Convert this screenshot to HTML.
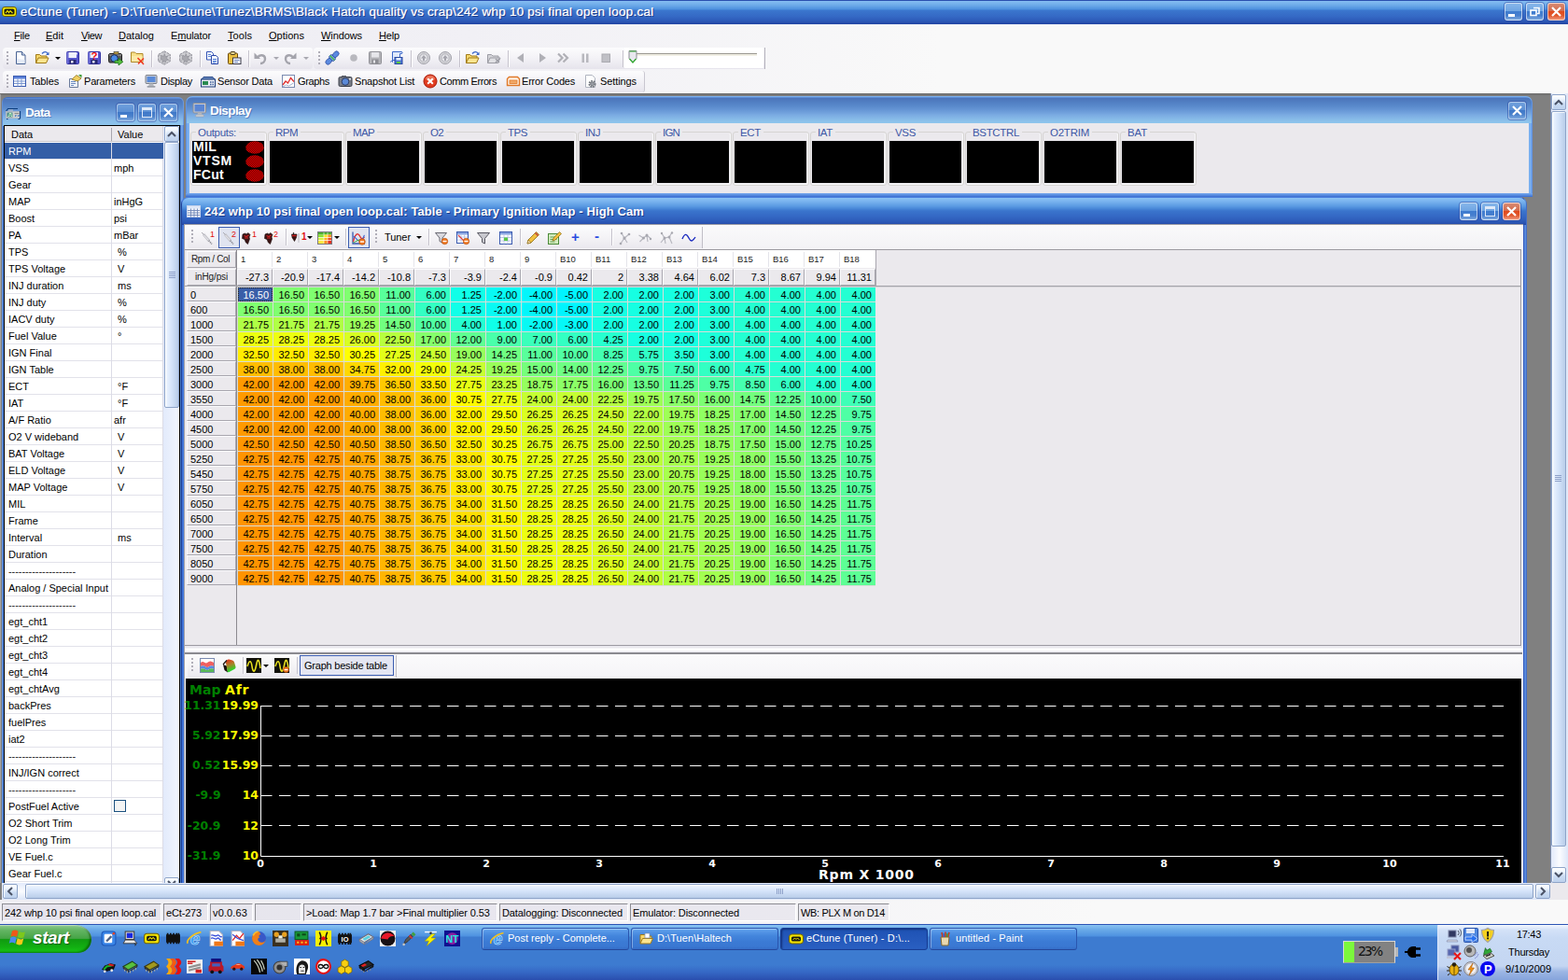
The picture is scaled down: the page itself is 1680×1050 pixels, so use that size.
<!DOCTYPE html><html><head><meta charset="utf-8"><title>eCtune (Tuner)</title><style>*{box-sizing:border-box;margin:0;padding:0}
html,body{width:1680px;height:1050px;overflow:hidden;background:#808080}
body{position:relative;font-family:"Liberation Sans",sans-serif;font-size:11px;color:#000}
.a{position:absolute}
.t{position:absolute;white-space:nowrap;line-height:14px;height:14px}
svg{position:absolute;overflow:visible}
.ttl{position:absolute;white-space:nowrap;color:#fff;font-weight:bold;line-height:16px;height:16px;font-size:13px;text-shadow:1px 1px 0 #20408a}
.sep{position:absolute;width:2px;height:18px;border-left:1px solid #c5c2cc;border-right:1px solid #fff}
.grip{position:absolute;width:2px;height:16px;background-image:repeating-linear-gradient(180deg,#b0aeb8 0,#b0aeb8 2px,transparent 2px,transparent 4px)}
.sb{position:absolute;background:#f0f0f6;border:1px solid #d8d6dc}
.sp{position:absolute;height:19px;top:968px;background:rgba(214,210,224,.33);border:1px solid;border-color:#8c8c92 #fff #fff #8c8c92;white-space:nowrap;overflow:hidden}
.xb{position:absolute;border:1px solid #fff;border-radius:3px}
</style></head><body>
<div class="a" style="left:0px;top:0px;width:1680px;height:26px;background:linear-gradient(180deg,#2a4fae 0,#2a4fae 1px,#86bef2 1px,#6aa8e8 6px,#4d90de 10px,#3b77ce 11px,#3468c4 18px,#2c58b6 23px,#2448a6 25px)"></div>
<svg style="left:2px;top:7px" width="16" height="11" viewBox="0 0 16 11"><rect x=".5" y=".5" width="15" height="10" rx="2.500" fill="#f4e800" stroke="#6a5e00"/><rect x="2.500" y="2.500" width="11" height="6" rx="1.500" fill="#1a1a10"/><path d="M4 7l2-2.500 1.500 2 1.500-2 2.500 2.500" stroke="#f4e800" fill="none" stroke-width="1.100"/></svg>
<span class="ttl" style="left:22px;top:5px;font-weight:normal;font-size:13.5px;text-shadow:1px 1px 0 #1c3c8c,0 0 1px #fff;letter-spacing:0.23px">eCtune (Tuner) - D:\Tuen\eCtune\Tunez\BRMS\Black Hatch quality vs crap\242 whp 10 psi final open loop.cal</span>
<div class="a" style="left:1612px;top:3px;width:19px;height:19px;background:linear-gradient(180deg,#86b6ea 0,#6ea4e2 48%,#3f7ccf 50%,#477fce 75%,#7fa9de 100%);border:1px solid rgba(255,255,255,0.6);border-radius:3px;box-shadow:0 0 0 1px rgba(40,70,160,.5)"></div>
<div class="a" style="left:1616px;top:15px;width:7px;height:3px;background:#fff"></div>
<div class="a" style="left:1635px;top:3px;width:19px;height:19px;background:linear-gradient(180deg,#86b6ea 0,#6ea4e2 48%,#3f7ccf 50%,#477fce 75%,#7fa9de 100%);border:1px solid rgba(255,255,255,0.6);border-radius:3px;box-shadow:0 0 0 1px rgba(40,70,160,.5)"></div>
<svg style="left:1635px;top:3px" width="19" height="19" viewBox="0 0 19 19"><path d="M8 5.5h6v6h-2" fill="none" stroke="#fff" stroke-width="1.6"/><rect x="5" y="8" width="6" height="5.5" fill="none" stroke="#fff" stroke-width="1.6"/></svg>
<div class="a" style="left:1658px;top:3px;width:19px;height:19px;background:linear-gradient(180deg,#d88a72 0,#d4694a 48%,#e04a1c 50%,#e2582c 75%,#f0987c 100%);border:1px solid rgba(255,255,255,0.6);border-radius:3px;box-shadow:0 0 0 1px rgba(40,70,160,.5)"></div>
<svg style="left:1658px;top:3px" width="19" height="19" viewBox="0 0 19 19"><path d="M5 5l9 9M14 5l-9 9" stroke="#fff" stroke-width="2.2" stroke-linecap="butt"/></svg>
<div class="a" style="left:0px;top:26px;width:1680px;height:74px;background:linear-gradient(90deg,#edecf2 0,#f1f0f5 30%,#f9f9f9 60%,#f9f9f9 100%)"></div>
<span class="t" style="left:15px;top:31px;letter-spacing:-0.18px"><u>F</u>ile</span>
<span class="t" style="left:49px;top:31px;letter-spacing:0.01px"><u>E</u>dit</span>
<span class="t" style="left:87px;top:31px;letter-spacing:-0.41px"><u>V</u>iew</span>
<span class="t" style="left:127px;top:31px;letter-spacing:0.01px"><u>D</u>atalog</span>
<span class="t" style="left:183px;top:31px;letter-spacing:-0.13px">E<u>m</u>ulator</span>
<span class="t" style="left:244px;top:31px;letter-spacing:0.06px"><u>T</u>ools</span>
<span class="t" style="left:288px;top:31px;letter-spacing:0.01px"><u>O</u>ptions</span>
<span class="t" style="left:344px;top:31px;letter-spacing:-0.09px"><u>W</u>indows</span>
<span class="t" style="left:406px;top:31px;letter-spacing:-0.16px"><u>H</u>elp</span>
<div class="a" style="left:3px;top:51px;width:332px;height:23px;background:linear-gradient(180deg,#fcfcfd 0,#f4f3f7 45%,#e6e4ec 100%);border-radius:4px 3px 3px 4px"></div>
<div class="a" style="left:336px;top:51px;width:484px;height:23px;background:linear-gradient(180deg,#fcfcfd 0,#f4f3f7 45%,#e6e4ec 100%);border-radius:4px 3px 3px 4px;border-right:1px solid #b4b2bc;border-radius:4px 0 0 4px"></div>
<div class="a" style="left:3px;top:76px;width:688px;height:23px;background:linear-gradient(180deg,#fcfcfd 0,#f4f3f7 45%,#e6e4ec 100%);border-radius:4px 3px 3px 4px;border-right:1px solid #c8c6d0"></div>
<div class="grip" style="left:7px;top:55px"></div>
<div class="grip" style="left:341px;top:55px"></div>
<div class="grip" style="left:7px;top:80px"></div>
<div class="sep" style="left:162px;top:54px"></div>
<div class="sep" style="left:214px;top:54px"></div>
<div class="sep" style="left:266px;top:54px"></div>
<div class="sep" style="left:440px;top:54px"></div>
<div class="sep" style="left:492px;top:54px"></div>
<div class="sep" style="left:544px;top:54px"></div>
<div class="sep" style="left:667px;top:54px"></div>
<svg style="left:14px;top:54px" width="16" height="16" viewBox="0 0 16 16"><path d="M3.500 1.500h6l3.500 3.500v9.500h-9.500z" fill="#fdfdff" stroke="#4a6494"/><path d="M4 9l8.500 1v4h-8.500z" fill="#e4eaf6"/><path d="M9.500 1.500v3.500h3.500" fill="#d4dcee" stroke="#4a6494"/></svg>
<svg style="left:37px;top:54px" width="16" height="16" viewBox="0 0 16 16"><path d="M1.5 13.500v-9h4l1.500 1.500h6v2" fill="#f6d66a" stroke="#a07a18"/><path d="M1.500 13.500l2.500-5.500h11l-2.500 5.500z" fill="#fbe58f" stroke="#a07a18"/><path d="M8 3.500c2-2.500 5-2.500 6 0" fill="none" stroke="#3a66c8" stroke-width="1.300"/><path d="M15.500 1.500v3.500h-3.500z" fill="#3a66c8"/></svg>
<svg style="left:70px;top:54px" width="16" height="16" viewBox="0 0 16 16"><rect x="1.500" y="1.500" width="13" height="13" rx="1" fill="#5656cc" stroke="#3030a0"/><path d="M2 2v12" stroke="#8c8ce4"/><rect x="3.500" y="2" width="8.500" height="6" fill="#f0f2fc"/><path d="M12.500 2.500v2" stroke="#c8c8f0"/><rect x="4.500" y="10" width="7" height="4.500" fill="#26266e"/><rect x="6" y="11" width="2.500" height="2.500" fill="#e8ecfa"/></svg>
<svg style="left:93px;top:54px" width="16" height="16" viewBox="0 0 16 16"><rect x="1.500" y="1.500" width="13" height="13" rx="1" fill="#5656cc" stroke="#3030a0"/><path d="M2 2v12" stroke="#8c8ce4"/><rect x="3.500" y="2" width="8.500" height="6" fill="#f0f2fc"/><rect x="4.500" y="10" width="7" height="4.500" fill="#26266e"/><rect x="6" y="11" width="2.500" height="2.500" fill="#e8ecfa"/><text x="8" y="10" font-size="11.500" font-weight="bold" fill="#f01010" text-anchor="middle" font-family="Liberation Sans,sans-serif">?</text></svg>
<svg style="left:116px;top:54px" width="16" height="16" viewBox="0 0 16 16"><rect x=".5" y="3.500" width="14" height="9.500" rx="1.500" fill="#585858" stroke="#202020"/><rect x="1" y="4" width="13" height="2" fill="#808080"/><rect x="6" y="1.500" width="5" height="2.500" fill="#c0a040" stroke="#303030" stroke-width=".6"/><circle cx="6.500" cy="8.500" r="3.800" fill="#4a8ae4" stroke="#1c2c58"/><path d="M7 11h4v-2.500l4.800 3.700-4.800 3.700v-2.400h-4z" fill="#58c040" stroke="#1c7418" stroke-width=".8"/></svg>
<svg style="left:139px;top:54px" width="16" height="16" viewBox="0 0 16 16"><path d="M1.500 12.500v-10.500h4l1.500 1.500h7v9z" fill="#f8e08a" stroke="#b08a28"/><path d="M2 6h11.500v6h-11.500z" fill="#fceaa8"/><path d="M8.500 8l6.500 7m0-6.500l-6 6" stroke="#f03820" stroke-width="1.500"/></svg>
<svg style="left:168px;top:54px" width="16" height="16" viewBox="0 0 16 16"><path d="M8 .8l6.300 3.600v7.200l-6.300 3.600-6.300-3.600v-7.200z" fill="#d0d0d4" stroke="#8e8e96" stroke-dasharray="2.500 .8"/><path d="M8 .8v14.400M1.700 4.400l12.600 7.200M14.300 4.400l-12.600 7.200" stroke="#9c9ca4" stroke-width=".7"/><path d="M5 5l2 1.500 1.500-2.500 1 3 2-1-1 2.500 2 1.500-2.500.5-.5 2.500-1.500-2-2 2v-3l-2-1z" fill="#a8a8ae" stroke="#86868e" stroke-width=".5"/></svg>
<svg style="left:191px;top:54px" width="16" height="16" viewBox="0 0 16 16"><path d="M8 .8l6.300 3.600v7.200l-6.300 3.600-6.300-3.600v-7.200z" fill="#d0d0d4" stroke="#8e8e96" stroke-dasharray="2.500 .8"/><path d="M8 .8v14.400M1.700 4.400l12.600 7.200M14.300 4.400l-12.600 7.200" stroke="#9c9ca4" stroke-width=".7"/><path d="M5 5l2 1.500 1.500-2.500 1 3 2-1-1 2.500 2 1.500-2.500.5-.5 2.500-1.500-2-2 2v-3l-2-1z" fill="#a8a8ae" stroke="#86868e" stroke-width=".5"/></svg>
<svg style="left:220px;top:54px" width="16" height="16" viewBox="0 0 16 16"><path d="M1.500 1.500h5l2 2v6.500h-7z" fill="#f4f8ff" stroke="#3454b4"/><path d="M3 4.500h3M3 6.500h4" stroke="#5a84d8"/><path d="M6.500 5.500h5l2 2v7h-7z" fill="#f4f8ff" stroke="#2c48a8"/><path d="M8 9.500h4M8 11.500h4M8 13h3" stroke="#4a78d4"/></svg>
<svg style="left:243px;top:54px" width="16" height="16" viewBox="0 0 16 16"><rect x="1.500" y="3" width="10" height="11.500" rx="1" fill="#ecc040" stroke="#6a4a10"/><rect x="4" y="1.500" width="5" height="3" rx="1" fill="#e0d090" stroke="#50401a"/><rect x="6.500" y="8" width="8.500" height="6.500" fill="#f4f6fc" stroke="#3a3a48"/><path d="M8 10.500h5.500M8 12.500h4" stroke="#7088c0"/></svg>
<svg style="left:271px;top:54px" width="16" height="16" viewBox="0 0 16 16"><path d="M1.500 2.500v6.500h6.500z" fill="#a4a4ac"/><path d="M5 7.500c2-3.500 8-3 8 1.500 0 3-2.500 5-5 5" fill="none" stroke="#a4a4ac" stroke-width="2.400"/></svg>
<svg style="left:303px;top:54px" width="16" height="16" viewBox="0 0 16 16"><path d="M14.500 2.500v6.500h-6.500z" fill="#a4a4ac"/><path d="M11 7.500c-2-3.500-8-3-8 1.500 0 3 2.500 5 5 5" fill="none" stroke="#a4a4ac" stroke-width="2.400"/></svg>
<svg style="left:348px;top:54px" width="16" height="16" viewBox="0 0 16 16"><g transform="rotate(-45 8 8)"><rect x="-1" y="5.500" width="7.500" height="5" rx="2.500" fill="#5a8ae0" stroke="#2a4aa0" stroke-width=".8"/><rect x="9.500" y="5.500" width="7.500" height="5" rx="2.500" fill="#5a8ae0" stroke="#2a4aa0" stroke-width=".8"/><rect x="6" y="4.500" width="4" height="7" rx="1" fill="#78a0e8" stroke="#2a4aa0" stroke-width=".8"/><path d="M8 4.500v7" stroke="#48c040" stroke-width="1.200"/></g></svg>
<svg style="left:371px;top:54px" width="16" height="16" viewBox="0 0 16 16"><circle cx="8" cy="8" r="3.800" fill="#b8b8be"/></svg>
<svg style="left:394px;top:54px" width="16" height="16" viewBox="0 0 16 16"><rect x="1.500" y="1.500" width="13" height="13" rx="1" fill="#b4b4b8" stroke="#909096"/><rect x="4" y="2" width="8" height="5.500" fill="#e6e6ea"/><rect x="4.500" y="9.500" width="7" height="5" fill="#8c8c92"/><rect x="6" y="10.500" width="2" height="3" fill="#e6e6ea"/></svg>
<svg style="left:417px;top:54px" width="16" height="16" viewBox="0 0 16 16"><path d="M3.500 1.500h9.500c1.500 0 1.500 2 0 2h-1.500v7h-8z" fill="#dfe9fb" stroke="#3a66c8"/><path d="M1.500 12.500c0-1.500 2-1.500 2 0v-9" fill="none" stroke="#3a66c8"/><rect x="6" y="7.500" width="8" height="7" fill="#4a74d4" stroke="#2a4aa0"/><rect x="7.500" y="8" width="5" height="2.500" fill="#e8f0ff"/><rect x="8" y="12" width="4" height="2" fill="#5ac840"/></svg>
<svg style="left:446px;top:54px" width="16" height="16" viewBox="0 0 16 16"><circle cx="8" cy="8" r="6.500" fill="#d4d4d8" stroke="#a0a0a8"/><circle cx="8" cy="8" r="4.200" fill="#e8e8ec" stroke="#b0b0b8"/><path d="M8 5l3 3.500h-2v2.500h-2v-2.500h-2z" fill="#a4a4ac"/></svg>
<svg style="left:469px;top:54px" width="16" height="16" viewBox="0 0 16 16"><circle cx="8" cy="8" r="6.500" fill="#d4d4d8" stroke="#a0a0a8"/><circle cx="8" cy="8" r="4.200" fill="#e8e8ec" stroke="#b0b0b8"/><path d="M8 5l3 3.500h-2v2.500h-2v-2.500h-2z" fill="#a4a4ac"/></svg>
<svg style="left:498px;top:54px" width="16" height="16" viewBox="0 0 16 16"><path d="M1.5 13.500v-9h4l1.500 1.500h6v2" fill="#f6d66a" stroke="#a07a18"/><path d="M1.500 13.500l2.500-5.500h11l-2.500 5.500z" fill="#fbe58f" stroke="#a07a18"/><path d="M8 3.500c2-2.500 5-2.500 6 0" fill="none" stroke="#3a66c8" stroke-width="1.300"/><path d="M15.500 1.500v3.500h-3.500z" fill="#3a66c8"/></svg>
<svg style="left:521px;top:54px" width="16" height="16" viewBox="0 0 16 16"><path d="M1.500 13.500v-9h4l1.500 1.500h6v2" fill="#d4d4d8" stroke="#9c9ca4"/><path d="M1.500 13.500l2.500-5.500h11l-2.500 5.500z" fill="#e0e0e4" stroke="#9c9ca4"/><path d="M10 9l4 4m0-4l-4 4" stroke="#9c9ca4" stroke-width="1.300"/></svg>
<svg style="left:550px;top:54px" width="16" height="16" viewBox="0 0 16 16"><path d="M11 3v10l-7-5z" fill="#b0b0b6"/></svg>
<svg style="left:573px;top:54px" width="16" height="16" viewBox="0 0 16 16"><path d="M5 3v10l7-5z" fill="#b0b0b6"/></svg>
<svg style="left:595px;top:54px" width="16" height="16" viewBox="0 0 16 16"><path d="M3 3.500l4.500 4.500-4.500 4.500M8.500 3.500l4.500 4.500-4.500 4.500" fill="none" stroke="#b0b0b6" stroke-width="2.200"/></svg>
<svg style="left:619px;top:54px" width="16" height="16" viewBox="0 0 16 16"><rect x="4.500" y="3.500" width="2.500" height="9.500" fill="#b8b8be"/><rect x="9" y="3.500" width="2.500" height="9.500" fill="#b8b8be"/></svg>
<svg style="left:641px;top:54px" width="16" height="16" viewBox="0 0 16 16"><rect x="4" y="4" width="8.500" height="8.500" fill="#c0c0c6" stroke="#aaaab0"/></svg>
<svg style="left:59px;top:61px" width="6" height="3" viewBox="0 0 6 3"><path d="M0 0h6l-3 3z" fill="#000"/></svg>
<svg style="left:293px;top:61px" width="6" height="3" viewBox="0 0 6 3"><path d="M0 0h6l-3 3z" fill="#a8a8b0"/></svg>
<svg style="left:325px;top:61px" width="6" height="3" viewBox="0 0 6 3"><path d="M0 0h6l-3 3z" fill="#a8a8b0"/></svg>
<div class="a" style="left:669px;top:51px;width:149px;height:22px;background:#fff"></div>
<div class="a" style="left:680px;top:57px;width:131px;height:3px;background:#f0eee4;border-top:1px solid #9a9890;border-left:1px solid #9a9890"></div>
<svg style="left:673px;top:54px" width="10" height="14" viewBox="0 0 10 14"><path d="M1 .5h8v8l-4 4.500-4-4.500z" fill="#e8e8ee" stroke="#8a8a92"/><path d="M1.500 9l3.500 4 3.500-4" fill="none" stroke="#30a830" stroke-width="1.200"/><path d="M1.500 1h7" stroke="#30a830"/></svg>
<svg style="left:13px;top:79px" width="16" height="16" viewBox="0 0 16 16"><rect x="1.500" y="2.500" width="13" height="11" fill="#fff" stroke="#3a5ab0"/><rect x="2" y="3" width="12" height="2.500" fill="#5a80d8"/><path d="M2 8h12M2 10.500h12M6 5.500v8M10 5.500v8" stroke="#7a96d0"/></svg>
<span class="t" style="left:32px;top:80px;;letter-spacing:-0.13px">Tables</span>
<svg style="left:72px;top:79px" width="16" height="16" viewBox="0 0 16 16"><path d="M2.500 5.500h9v9h-9z" fill="#f4f6fc" stroke="#6a7a9a"/><path d="M4 8.500h5M4 10.500h5M4 12.500h3" stroke="#6a8ac0"/><path d="M5 6l5-4.500 5 3.500-4 3z" fill="#f0d060" stroke="#907018" stroke-width=".8"/><path d="M12 1l3.500 0 0 3.500z" fill="#3a9a30"/></svg>
<span class="t" style="left:90px;top:80px;;letter-spacing:-0.19px">Parameters</span>
<svg style="left:154px;top:79px" width="16" height="16" viewBox="0 0 16 16"><rect x="2" y="1.500" width="12" height="9" rx="1" fill="#c8ccd4" stroke="#7a7e88"/><rect x="3.500" y="3" width="9" height="6" fill="#5a8ad8"/><path d="M6 10.500h4l1 3h-6z" fill="#b4b8c0"/><rect x="3.500" y="13" width="9" height="1.800" rx=".8" fill="#9a9ea8"/></svg>
<span class="t" style="left:172px;top:80px;;letter-spacing:-0.30px">Display</span>
<svg style="left:215px;top:79px" width="16" height="16" viewBox="0 0 16 16"><path d="M1 6l2-2.500h10l2 2.500" fill="#6a8ac0" stroke="#2a4a88"/><rect x=".5" y="6" width="15" height="8" fill="#e8ecf4" stroke="#1a3a78"/><rect x="2" y="8" width="6" height="4" fill="#2a8a50"/><path d="M10 9h1.500M12.500 9h1.500M10 11.500h1.500M12.500 11.500h1.500" stroke="#3a5a98" stroke-width="1.500"/></svg>
<span class="t" style="left:233px;top:80px;;letter-spacing:-0.20px">Sensor Data</span>
<svg style="left:301px;top:79px" width="16" height="16" viewBox="0 0 16 16"><rect x="1.500" y="1.500" width="13" height="13" fill="#fff" stroke="#7a8ab0"/><path d="M2 12l3-4 2.500 2 3-5.500 3.500 4" fill="none" stroke="#e03030" stroke-width="1.300"/><path d="M2 14l3.500-2 3 1 5-3" fill="none" stroke="#8a9ac0" stroke-width=".8"/></svg>
<span class="t" style="left:319px;top:80px;;letter-spacing:-0.35px">Graphs</span>
<svg style="left:362px;top:79px" width="16" height="16" viewBox="0 0 16 16"><rect x="1" y="3.500" width="14" height="10" rx="1.500" fill="#7a7e88" stroke="#3a3e48"/><rect x="4" y="2" width="5" height="2.500" fill="#5a5e68"/><circle cx="8" cy="8.500" r="3.800" fill="#5c8ad8" stroke="#2c3c68"/><rect x="12" y="5" width="2" height="1.500" fill="#e8e8f0"/></svg>
<span class="t" style="left:380px;top:80px;;letter-spacing:-0.20px">Snapshot List</span>
<svg style="left:453px;top:79px" width="16" height="16" viewBox="0 0 16 16"><circle cx="8" cy="8" r="7" fill="#e03c20" stroke="#a81808"/><ellipse cx="8" cy="5" rx="5" ry="3" fill="#f08a70" opacity=".7"/><path d="M5.200 5.200l5.600 5.600m0-5.600l-5.600 5.600" stroke="#fff" stroke-width="2"/></svg>
<span class="t" style="left:471px;top:80px;;letter-spacing:-0.40px">Comm Errors</span>
<svg style="left:542px;top:79px" width="16" height="16" viewBox="0 0 16 16"><path d="M1.500 5.500l2-2h9l2 2v7h-13z" fill="#fff4e8" stroke="#e07828" stroke-width="1.400"/><rect x="4" y="7" width="8" height="3.500" fill="#f0a868" stroke="#e07828" stroke-width=".8"/></svg>
<span class="t" style="left:559px;top:80px;;letter-spacing:-0.21px">Error Codes</span>
<svg style="left:625px;top:79px" width="16" height="16" viewBox="0 0 16 16"><path d="M2.500 1.500h7l3 3v10h-10z" fill="#fff" stroke="#b0b4c0"/><circle cx="9.500" cy="11" r="3" fill="none" stroke="#70747c" stroke-width="2" stroke-dasharray="1.600 .9"/><circle cx="9.500" cy="11" r="1.800" fill="#a0a4ac" stroke="#60646c" stroke-width=".8"/></svg>
<span class="t" style="left:643px;top:80px;;letter-spacing:-0.09px">Settings</span>
<div class="a" style="left:0px;top:100px;width:1661px;height:1px;background:#6c6c6c"></div>
<div class="a" style="left:0px;top:101px;width:1px;height:845px;background:#a4a4a4"></div>
<div class="a" style="left:1px;top:101px;width:1660px;height:2px;background:linear-gradient(180deg,#747474,#808080)"></div>
<div class="a" style="left:2px;top:104px;width:195px;height:846px;background:linear-gradient(90deg,#6a9ae2 0,#3f6fc6 2px,#3f6fc6 3px,#6a9ae2 100%);border-radius:6px 6px 0 0"></div>
<div class="a" style="left:3px;top:105px;width:193px;height:30px;background:linear-gradient(180deg,#6a9ee8 0,#4c74ba 1px,#5280c4 6px,#5a8acc 10px,#6a9ad8 15px,#7aaae2 19px,#88bce8 24px,#90c8ee 30px);border-radius:5px 5px 0 0"></div>
<div class="a" style="left:193px;top:134px;width:4px;height:812px;background:linear-gradient(90deg,#3f6fc6,#7fb0f0 50%,#3f6fc6)"></div>
<svg style="left:6px;top:116px" width="16" height="12" viewBox="0 0 16 12"><path d="M.5 3l2-2.500h10.500" fill="none" stroke="#0c3c7c" stroke-width="1.100"/><path d="M3 2h5" stroke="#c8c8c8" stroke-width="1"/><rect x=".5" y="3.500" width="15" height="7" fill="#d2d2d2" stroke="#b8b8b8" stroke-width=".6"/><path d="M15.500 3v8" stroke="#0c3c7c" stroke-width="1.200"/><rect x="1.500" y="4.500" width="6" height="5" fill="#48888c"/><path d="M2.500 8.500h1.500v-3h2v3h1" fill="none" stroke="#c8ffc0" stroke-width=".9"/><path d="M9.500 5.500h5" stroke="#8a8a8a" stroke-width="1.200"/><path d="M10 8.500l1.500-1M13 8.500l1.500-1" stroke="#2a6ac0" stroke-width="1.300"/><path d="M1 11.500h1.500M13.500 11.500h2" stroke="#0c3c7c" stroke-width="1.200"/></svg>
<span class="ttl" style="left:27px;top:113px;font-size:13.500px;text-shadow:1px 1px 0 rgba(40,70,140,.45);letter-spacing:-0.69px">Data</span>
<div class="a" style="left:125px;top:111px;width:19px;height:19px;background:linear-gradient(180deg,#6f9fdc 0,#5a8fd4 48%,#3f78c8 50%,#4b82cc 75%,#7da8de 100%);border:1px solid rgba(255,255,255,0.42);border-radius:3px;box-shadow:0 0 0 1px rgba(40,70,160,.5)"></div>
<div class="a" style="left:129px;top:123px;width:7px;height:3px;background:#fff"></div>
<div class="a" style="left:148px;top:111px;width:19px;height:19px;background:linear-gradient(180deg,#6f9fdc 0,#5a8fd4 48%,#3f78c8 50%,#4b82cc 75%,#7da8de 100%);border:1px solid rgba(255,255,255,0.42);border-radius:3px;box-shadow:0 0 0 1px rgba(40,70,160,.5)"></div>
<div class="a" style="left:152px;top:115px;width:11px;height:11px;border:1px solid #dfe9f8;border-top:3px solid #dfe9f8"></div>
<div class="a" style="left:171px;top:111px;width:19px;height:19px;background:linear-gradient(180deg,#6f9fdc 0,#5a8fd4 48%,#3f78c8 50%,#4b82cc 75%,#7da8de 100%);border:1px solid rgba(255,255,255,0.42);border-radius:3px;box-shadow:0 0 0 1px rgba(40,70,160,.5)"></div>
<svg style="left:171px;top:111px" width="19" height="19" viewBox="0 0 19 19"><path d="M5 5l9 9M14 5l-9 9" stroke="#fff" stroke-width="2.2" stroke-linecap="butt"/></svg>
<div class="a" style="left:4px;top:134px;width:189px;height:816px;background:#fff;border:1px solid #000;border-bottom:0"></div>
<div class="a" style="left:5px;top:135px;width:170px;height:17px;background:#ebe9ed;border-bottom:1px solid #c8c6cc;border-right:1px solid #d8d6dc"></div>
<div class="a" style="left:119px;top:137px;width:1px;height:14px;background:#a8a6ae"></div>
<span class="t" style="left:12px;top:137px;">Data</span>
<span class="t" style="left:126px;top:137px;">Value</span>
<div class="a" style="left:5px;top:153px;width:170px;height:798px;background-image:repeating-linear-gradient(180deg,transparent 0,transparent 17px,#e2e2ea 17px,#e2e2ea 18px)"></div>
<div class="a" style="left:119px;top:152px;width:1px;height:798px;background:#dcdce6"></div>
<div class="a" style="left:174px;top:152px;width:1px;height:798px;background:#dcdce6"></div>
<div class="a" style="left:5px;top:153px;width:170px;height:17px;background:#345ea6"></div>
<div class="a" style="left:119px;top:153px;width:1px;height:17px;background:#dcdce6"></div>
<span class="t" style="left:9px;top:155px;color:#fff;">RPM</span>
<span class="t" style="left:9px;top:173px;">VSS</span>
<span class="t" style="left:122px;top:173px;">mph</span>
<span class="t" style="left:9px;top:191px;">Gear</span>
<span class="t" style="left:9px;top:209px;">MAP</span>
<span class="t" style="left:122px;top:209px;">inHgG</span>
<span class="t" style="left:9px;top:227px;">Boost</span>
<span class="t" style="left:122px;top:227px;">psi</span>
<span class="t" style="left:9px;top:245px;">PA</span>
<span class="t" style="left:122px;top:245px;">mBar</span>
<span class="t" style="left:9px;top:263px;">TPS</span>
<span class="t" style="left:126px;top:263px;">%</span>
<span class="t" style="left:9px;top:281px;">TPS Voltage</span>
<span class="t" style="left:126px;top:281px;">V</span>
<span class="t" style="left:9px;top:299px;">INJ duration</span>
<span class="t" style="left:126px;top:299px;">ms</span>
<span class="t" style="left:9px;top:317px;">INJ duty</span>
<span class="t" style="left:126px;top:317px;">%</span>
<span class="t" style="left:9px;top:335px;">IACV duty</span>
<span class="t" style="left:126px;top:335px;">%</span>
<span class="t" style="left:9px;top:353px;">Fuel Value</span>
<span class="t" style="left:126px;top:353px;">°</span>
<span class="t" style="left:9px;top:371px;">IGN Final</span>
<span class="t" style="left:9px;top:389px;">IGN Table</span>
<span class="t" style="left:9px;top:407px;">ECT</span>
<span class="t" style="left:126px;top:407px;">°F</span>
<span class="t" style="left:9px;top:425px;">IAT</span>
<span class="t" style="left:126px;top:425px;">°F</span>
<span class="t" style="left:9px;top:443px;">A/F Ratio</span>
<span class="t" style="left:122px;top:443px;">afr</span>
<span class="t" style="left:9px;top:461px;">O2 V wideband</span>
<span class="t" style="left:126px;top:461px;">V</span>
<span class="t" style="left:9px;top:479px;">BAT Voltage</span>
<span class="t" style="left:126px;top:479px;">V</span>
<span class="t" style="left:9px;top:497px;">ELD Voltage</span>
<span class="t" style="left:126px;top:497px;">V</span>
<span class="t" style="left:9px;top:515px;">MAP Voltage</span>
<span class="t" style="left:126px;top:515px;">V</span>
<span class="t" style="left:9px;top:533px;">MIL</span>
<span class="t" style="left:9px;top:551px;">Frame</span>
<span class="t" style="left:9px;top:569px;">Interval</span>
<span class="t" style="left:126px;top:569px;">ms</span>
<span class="t" style="left:9px;top:587px;">Duration</span>
<span class="t" style="left:9px;top:605px;color:#222;letter-spacing:-0.06px">--------------------</span>
<span class="t" style="left:9px;top:623px;">Analog / Special Input</span>
<span class="t" style="left:9px;top:641px;color:#222;letter-spacing:-0.06px">--------------------</span>
<span class="t" style="left:9px;top:659px;">egt_cht1</span>
<span class="t" style="left:9px;top:677px;">egt_cht2</span>
<span class="t" style="left:9px;top:695px;">egt_cht3</span>
<span class="t" style="left:9px;top:713px;">egt_cht4</span>
<span class="t" style="left:9px;top:731px;">egt_chtAvg</span>
<span class="t" style="left:9px;top:749px;">backPres</span>
<span class="t" style="left:9px;top:767px;">fuelPres</span>
<span class="t" style="left:9px;top:785px;">iat2</span>
<span class="t" style="left:9px;top:803px;color:#222;letter-spacing:-0.06px">--------------------</span>
<span class="t" style="left:9px;top:821px;">INJ/IGN correct</span>
<span class="t" style="left:9px;top:839px;color:#222;letter-spacing:-0.06px">--------------------</span>
<span class="t" style="left:9px;top:857px;">PostFuel Active</span>
<div class="a" style="left:122px;top:857px;width:13px;height:13px;background:#f4f4f4;border:1px solid #1c5180"></div>
<span class="t" style="left:9px;top:875px;">O2 Short Trim</span>
<span class="t" style="left:9px;top:893px;">O2 Long Trim</span>
<span class="t" style="left:9px;top:911px;">VE Fuel.c</span>
<span class="t" style="left:9px;top:929px;">Gear Fuel.c</span>
<div class="a" style="left:175px;top:135px;width:17px;height:815px;background:linear-gradient(90deg,#e2eafb,#f2f6fe)"></div>
<div class="a" style="left:176px;top:135px;width:16px;height:17px;background:linear-gradient(180deg,#ffffff 0,#f0f6fe 25%,#cbdcf3 60%,#bdd1ed 100%);border:1px solid #8ea4c8;border-radius:2px;box-shadow:inset 1px 1px 0 rgba(255,255,255,.8)"></div>
<svg style="left:179px;top:140px" width="10" height="7" viewBox="0 0 10 7"><path d="M1 6l4-4 4 4" fill="none" stroke="#4a5266" stroke-width="2"/></svg>
<div class="a" style="left:176px;top:152px;width:16px;height:285px;background:linear-gradient(90deg,#ffffff 0,#e8f1fe 14%,#d4e3f9 50%,#b9cde9 100%);border:1px solid #8ea4c8;border-radius:2px;box-shadow:inset 1px 1px 0 rgba(255,255,255,.8)"></div>
<div class="a" style="left:181px;top:291px;width:7px;height:1px;background:#8ea0c8"></div>
<div class="a" style="left:181px;top:293px;width:7px;height:1px;background:#8ea0c8"></div>
<div class="a" style="left:181px;top:295px;width:7px;height:1px;background:#8ea0c8"></div>
<div class="a" style="left:181px;top:297px;width:7px;height:1px;background:#8ea0c8"></div>
<div class="a" style="left:176px;top:940px;width:16px;height:16px;background:linear-gradient(180deg,#ffffff 0,#f0f6fe 25%,#cbdcf3 60%,#bdd1ed 100%);border:1px solid #8ea4c8;border-radius:2px;box-shadow:inset 1px 1px 0 rgba(255,255,255,.8)"></div>
<svg style="left:179px;top:943px" width="10" height="7" viewBox="0 0 10 7"><path d="M1 1l4 4 4-4" fill="none" stroke="#4a5266" stroke-width="2"/></svg>
<div class="a" style="left:199px;top:103px;width:1443px;height:108px;background:linear-gradient(90deg,#5a8ade 0,#7ab0f0 2px,#7ab0f0 1441px,#5a8ade 1443px);border-radius:7px 7px 0 0"></div>
<div class="a" style="left:200px;top:104px;width:1441px;height:28px;background:linear-gradient(180deg,#6a9ee8 0,#4c74ba 1px,#5280c4 6px,#5a8acc 10px,#6a9ad8 15px,#7aaae2 19px,#88bce8 24px,#90c8ee 29px);border-radius:6px 6px 0 0"></div>
<div class="a" style="left:203px;top:132px;width:1435px;height:75px;background:#ebe9ed"></div>
<div class="a" style="left:199px;top:207px;width:1443px;height:4px;background:linear-gradient(180deg,#76a8ee 0,#5a8ee0 50%,#3a6cd0 100%)"></div>
<svg style="left:206px;top:110px" width="16" height="16" viewBox="0 0 16 16"><rect x="1" y=".5" width="13.500" height="10.500" rx="1" fill="#c4c8d0" stroke="#8a8e98"/><rect x="2.500" y="2" width="10.500" height="7.500" fill="#5a86d4"/><path d="M6 11h4l.8 2.500h-5.600z" fill="#b4b8c0"/><rect x="3.500" y="13" width="9" height="2" rx="1" fill="#d0d4da" stroke="#9a9ea8" stroke-width=".6"/></svg>
<span class="ttl" style="left:225px;top:111px;font-size:13.500px;text-shadow:1px 1px 0 rgba(40,70,140,.45);letter-spacing:-0.58px">Display</span>
<div class="a" style="left:1616px;top:109px;width:19px;height:19px;background:linear-gradient(180deg,#6f9fdc 0,#5a8fd4 48%,#3f78c8 50%,#4b82cc 75%,#7da8de 100%);border:1px solid rgba(255,255,255,0.42);border-radius:3px;box-shadow:0 0 0 1px rgba(40,70,160,.5)"></div>
<svg style="left:1616px;top:109px" width="19" height="19" viewBox="0 0 19 19"><path d="M5 5l9 9M14 5l-9 9" stroke="#fff" stroke-width="2.2" stroke-linecap="butt"/></svg>
<div class="a" style="left:204px;top:141px;width:82px;height:58px;border:1px solid #d6d4d2;border-radius:3px"></div>
<div class="a" style="left:205px;top:142px;width:80px;height:56px;border:1px solid #f8f8fa;border-radius:3px;border-top-color:transparent;border-left-color:transparent"></div>
<div class="a" style="left:210px;top:136px;width:46px;height:12px;background:#ebe9ed"></div>
<span class="t" style="left:212px;top:135px;color:#3d58a6;font-size:11.5px;letter-spacing:-0.31px">Outputs:</span>
<div class="a" style="left:206px;top:151px;width:77px;height:45px;background:#000"></div>
<div class="a" style="left:287px;top:141px;width:82px;height:58px;border:1px solid #d6d4d2;border-radius:3px"></div>
<div class="a" style="left:288px;top:142px;width:80px;height:56px;border:1px solid #f8f8fa;border-radius:3px;border-top-color:transparent;border-left-color:transparent"></div>
<div class="a" style="left:293px;top:136px;width:29px;height:12px;background:#ebe9ed"></div>
<span class="t" style="left:295px;top:135px;color:#3d58a6;font-size:11.5px;letter-spacing:-0.52px">RPM</span>
<div class="a" style="left:289px;top:151px;width:77px;height:45px;background:#000"></div>
<div class="a" style="left:370px;top:141px;width:82px;height:58px;border:1px solid #d6d4d2;border-radius:3px"></div>
<div class="a" style="left:371px;top:142px;width:80px;height:56px;border:1px solid #f8f8fa;border-radius:3px;border-top-color:transparent;border-left-color:transparent"></div>
<div class="a" style="left:376px;top:136px;width:28px;height:12px;background:#ebe9ed"></div>
<span class="t" style="left:378px;top:135px;color:#3d58a6;font-size:11.5px;letter-spacing:-0.64px">MAP</span>
<div class="a" style="left:372px;top:151px;width:77px;height:45px;background:#000"></div>
<div class="a" style="left:453px;top:141px;width:82px;height:58px;border:1px solid #d6d4d2;border-radius:3px"></div>
<div class="a" style="left:454px;top:142px;width:80px;height:56px;border:1px solid #f8f8fa;border-radius:3px;border-top-color:transparent;border-left-color:transparent"></div>
<div class="a" style="left:459px;top:136px;width:19px;height:12px;background:#ebe9ed"></div>
<span class="t" style="left:461px;top:135px;color:#3d58a6;font-size:11.5px;letter-spacing:-0.67px">O2</span>
<div class="a" style="left:455px;top:151px;width:77px;height:45px;background:#000"></div>
<div class="a" style="left:536px;top:141px;width:82px;height:58px;border:1px solid #d6d4d2;border-radius:3px"></div>
<div class="a" style="left:537px;top:142px;width:80px;height:56px;border:1px solid #f8f8fa;border-radius:3px;border-top-color:transparent;border-left-color:transparent"></div>
<div class="a" style="left:542px;top:136px;width:26px;height:12px;background:#ebe9ed"></div>
<span class="t" style="left:544px;top:135px;color:#3d58a6;font-size:11.5px;letter-spacing:-0.46px">TPS</span>
<div class="a" style="left:538px;top:151px;width:77px;height:45px;background:#000"></div>
<div class="a" style="left:619px;top:141px;width:82px;height:58px;border:1px solid #d6d4d2;border-radius:3px"></div>
<div class="a" style="left:620px;top:142px;width:80px;height:56px;border:1px solid #f8f8fa;border-radius:3px;border-top-color:transparent;border-left-color:transparent"></div>
<div class="a" style="left:625px;top:136px;width:21px;height:12px;background:#ebe9ed"></div>
<span class="t" style="left:627px;top:135px;color:#3d58a6;font-size:11.5px;letter-spacing:-0.42px">INJ</span>
<div class="a" style="left:621px;top:151px;width:77px;height:45px;background:#000"></div>
<div class="a" style="left:702px;top:141px;width:82px;height:58px;border:1px solid #d6d4d2;border-radius:3px"></div>
<div class="a" style="left:703px;top:142px;width:80px;height:56px;border:1px solid #f8f8fa;border-radius:3px;border-top-color:transparent;border-left-color:transparent"></div>
<div class="a" style="left:708px;top:136px;width:23px;height:12px;background:#ebe9ed"></div>
<span class="t" style="left:710px;top:135px;color:#3d58a6;font-size:11.5px;letter-spacing:-0.82px">IGN</span>
<div class="a" style="left:704px;top:151px;width:77px;height:45px;background:#000"></div>
<div class="a" style="left:785px;top:141px;width:82px;height:58px;border:1px solid #d6d4d2;border-radius:3px"></div>
<div class="a" style="left:786px;top:142px;width:80px;height:56px;border:1px solid #f8f8fa;border-radius:3px;border-top-color:transparent;border-left-color:transparent"></div>
<div class="a" style="left:791px;top:136px;width:27px;height:12px;background:#ebe9ed"></div>
<span class="t" style="left:793px;top:135px;color:#3d58a6;font-size:11.5px;letter-spacing:-0.33px">ECT</span>
<div class="a" style="left:787px;top:151px;width:77px;height:45px;background:#000"></div>
<div class="a" style="left:868px;top:141px;width:82px;height:58px;border:1px solid #d6d4d2;border-radius:3px"></div>
<div class="a" style="left:869px;top:142px;width:80px;height:56px;border:1px solid #f8f8fa;border-radius:3px;border-top-color:transparent;border-left-color:transparent"></div>
<div class="a" style="left:874px;top:136px;width:21px;height:12px;background:#ebe9ed"></div>
<span class="t" style="left:876px;top:135px;color:#3d58a6;font-size:11.5px;letter-spacing:-0.35px">IAT</span>
<div class="a" style="left:870px;top:151px;width:77px;height:45px;background:#000"></div>
<div class="a" style="left:951px;top:141px;width:82px;height:58px;border:1px solid #d6d4d2;border-radius:3px"></div>
<div class="a" style="left:952px;top:142px;width:80px;height:56px;border:1px solid #f8f8fa;border-radius:3px;border-top-color:transparent;border-left-color:transparent"></div>
<div class="a" style="left:957px;top:136px;width:27px;height:12px;background:#ebe9ed"></div>
<span class="t" style="left:959px;top:135px;color:#3d58a6;font-size:11.5px;letter-spacing:-0.34px">VSS</span>
<div class="a" style="left:953px;top:151px;width:77px;height:45px;background:#000"></div>
<div class="a" style="left:1034px;top:141px;width:82px;height:58px;border:1px solid #d6d4d2;border-radius:3px"></div>
<div class="a" style="left:1035px;top:142px;width:80px;height:56px;border:1px solid #f8f8fa;border-radius:3px;border-top-color:transparent;border-left-color:transparent"></div>
<div class="a" style="left:1040px;top:136px;width:55px;height:12px;background:#ebe9ed"></div>
<span class="t" style="left:1042px;top:135px;color:#3d58a6;font-size:11.5px;letter-spacing:-0.34px">BSTCTRL</span>
<div class="a" style="left:1036px;top:151px;width:77px;height:45px;background:#000"></div>
<div class="a" style="left:1117px;top:141px;width:82px;height:58px;border:1px solid #d6d4d2;border-radius:3px"></div>
<div class="a" style="left:1118px;top:142px;width:80px;height:56px;border:1px solid #f8f8fa;border-radius:3px;border-top-color:transparent;border-left-color:transparent"></div>
<div class="a" style="left:1123px;top:136px;width:47px;height:12px;background:#ebe9ed"></div>
<span class="t" style="left:1125px;top:135px;color:#3d58a6;font-size:11.5px;letter-spacing:-0.24px">O2TRIM</span>
<div class="a" style="left:1119px;top:151px;width:77px;height:45px;background:#000"></div>
<div class="a" style="left:1200px;top:141px;width:82px;height:58px;border:1px solid #d6d4d2;border-radius:3px"></div>
<div class="a" style="left:1201px;top:142px;width:80px;height:56px;border:1px solid #f8f8fa;border-radius:3px;border-top-color:transparent;border-left-color:transparent"></div>
<div class="a" style="left:1206px;top:136px;width:26px;height:12px;background:#ebe9ed"></div>
<span class="t" style="left:1208px;top:135px;color:#3d58a6;font-size:11.5px;letter-spacing:-0.17px">BAT</span>
<div class="a" style="left:1202px;top:151px;width:77px;height:45px;background:#000"></div>
<span class="t" style="left:207px;top:150px;color:#fff;font-weight:bold;font-size:14px;line-height:15px;letter-spacing:0.30px">MIL</span>
<svg style="left:263px;top:151px" width="20" height="14" viewBox="0 0 20 14"><defs><pattern id="ck0" width="2" height="2" patternUnits="userSpaceOnUse"><rect width="2" height="2" fill="#5c0000"/><rect width="1" height="1" fill="#f00000"/><rect x="1" y="1" width="1" height="1" fill="#f00000"/></pattern></defs><ellipse cx="10" cy="7" rx="9.800" ry="6.800" fill="url(#ck0)"/></svg>
<span class="t" style="left:207px;top:165px;color:#fff;font-weight:bold;font-size:14px;line-height:15px;letter-spacing:0.78px">VTSM</span>
<svg style="left:263px;top:166px" width="20" height="14" viewBox="0 0 20 14"><defs><pattern id="ck1" width="2" height="2" patternUnits="userSpaceOnUse"><rect width="2" height="2" fill="#5c0000"/><rect width="1" height="1" fill="#f00000"/><rect x="1" y="1" width="1" height="1" fill="#f00000"/></pattern></defs><ellipse cx="10" cy="7" rx="9.800" ry="6.800" fill="url(#ck1)"/></svg>
<span class="t" style="left:207px;top:180px;color:#fff;font-weight:bold;font-size:14px;line-height:15px;letter-spacing:0.28px">FCut</span>
<svg style="left:263px;top:181px" width="20" height="14" viewBox="0 0 20 14"><defs><pattern id="ck2" width="2" height="2" patternUnits="userSpaceOnUse"><rect width="2" height="2" fill="#5c0000"/><rect width="1" height="1" fill="#f00000"/><rect x="1" y="1" width="1" height="1" fill="#f00000"/></pattern></defs><ellipse cx="10" cy="7" rx="9.800" ry="6.800" fill="url(#ck2)"/></svg>
<div class="a" style="left:194px;top:211px;width:1442px;height:740px;background:linear-gradient(90deg,#1c3c90 0,#1c3c90 1px,#3a6cd4 1px,#4a80e0 3px,#4a7ede 1437px,#2c4aa8 1438px,#3a68cc 1439px,#6a9ee8 1440px,#4a78d0 1441px,#3a62c0 1442px);border-radius:8px 8px 0 0"></div>
<div class="a" style="left:195px;top:212px;width:1440px;height:29px;background:linear-gradient(180deg,#8cc4f4 0,#78b2ee 4px,#5a9ae2 9px,#4684d6 12px,#3a74cc 14px,#3468c4 20px,#2c58b6 26px,#2448a6 29px);border-radius:7px 7px 0 0"></div>
<div class="a" style="left:197px;top:240px;width:1435px;height:1px;background:#9c9ca4"></div>
<svg style="left:200px;top:220px" width="15" height="13" viewBox="0 0 15 13"><rect x=".5" y=".5" width="14" height="12" fill="#f4f6fc" stroke="#c8d4ec"/><rect x="1" y="1" width="13" height="2.500" fill="#dfe8f8"/><path d="M1 5.500h13M1 8h13M1 10.500h13M4.500 3.500v9M8 3.500v9M11.500 3.500v9" stroke="#7088b8" stroke-width=".9"/></svg>
<span class="ttl" style="left:219px;top:219px;font-size:13px;text-shadow:1px 1px 0 #1c3c8c;letter-spacing:0.11px">242 whp 10 psi final open loop.cal: Table - Primary Ignition Map - High Cam</span>
<div class="a" style="left:1564px;top:217px;width:19px;height:19px;background:linear-gradient(180deg,#86b6ea 0,#6ea4e2 48%,#3f7ccf 50%,#477fce 75%,#7fa9de 100%);border:1px solid rgba(255,255,255,0.6);border-radius:3px;box-shadow:0 0 0 1px rgba(40,70,160,.5)"></div>
<div class="a" style="left:1568px;top:229px;width:7px;height:3px;background:#fff"></div>
<div class="a" style="left:1587px;top:217px;width:19px;height:19px;background:linear-gradient(180deg,#86b6ea 0,#6ea4e2 48%,#3f7ccf 50%,#477fce 75%,#7fa9de 100%);border:1px solid rgba(255,255,255,0.6);border-radius:3px;box-shadow:0 0 0 1px rgba(40,70,160,.5)"></div>
<div class="a" style="left:1591px;top:221px;width:11px;height:11px;border:1px solid #dfe9f8;border-top:3px solid #dfe9f8"></div>
<div class="a" style="left:1610px;top:217px;width:19px;height:19px;background:linear-gradient(180deg,#d88a72 0,#d4694a 48%,#e04a1c 50%,#e2582c 75%,#f0987c 100%);border:1px solid rgba(255,255,255,0.6);border-radius:3px;box-shadow:0 0 0 1px rgba(40,70,160,.5)"></div>
<svg style="left:1610px;top:217px" width="19" height="19" viewBox="0 0 19 19"><path d="M5 5l9 9M14 5l-9 9" stroke="#fff" stroke-width="2.2" stroke-linecap="butt"/></svg>
<div class="a" style="left:198px;top:241px;width:1434px;height:710px;background:#f8f8fb"></div>
<div class="a" style="left:198px;top:268px;width:1432px;height:424px;background:#ebe9ed;border-right:1px solid #9c9aa2;border-bottom:1px solid #9c9aa2"></div>
<div class="a" style="left:198px;top:241px;width:1432px;height:27px;background:linear-gradient(180deg,#fafafb,#f3f2f5);border-bottom:1px solid #9c9aa0"></div>
<div class="a" style="left:201px;top:243px;width:552px;height:23px;background:linear-gradient(180deg,#fbfbfc 0,#f4f3f6 50%,#eae8ee 100%);border-right:1px solid #c0bec6;border-radius:3px 0 0 3px"></div>
<div class="grip" style="left:205px;top:246px"></div><div class="grip" style="left:402px;top:246px"></div>
<div class="sep" style="left:306px;top:245px"></div>
<div class="sep" style="left:370px;top:245px"></div>
<div class="sep" style="left:459px;top:245px"></div>
<div class="sep" style="left:557px;top:245px"></div>
<div class="sep" style="left:655px;top:245px"></div>
<div class="a" style="left:234px;top:243px;width:23px;height:23px;background:#e0e4f0;border:1px solid #3a5cb0"></div>
<div class="a" style="left:373px;top:243px;width:23px;height:23px;background:#e0e4f0;border:1px solid #3a5cb0"></div>
<svg style="left:214px;top:247px" width="16" height="16" viewBox="0 0 16 16"><path d="M4 4l6 7" stroke="#c4c4ca" stroke-width="2.800"/><path d="M2 2l2.500 2.500" stroke="#a8a8b0" stroke-width="1"/><path d="M9.500 10.500l3.500 4" stroke="#8a8a92" stroke-width="1.600" stroke-dasharray="1.500 .7"/><path d="M4.500 5l5 5.500" stroke="#ececf0" stroke-width="1"/></svg>
<svg style="left:237px;top:247px" width="16" height="16" viewBox="0 0 16 16"><path d="M4 4l6 7" stroke="#c4c4ca" stroke-width="2.800"/><path d="M2 2l2.500 2.500" stroke="#a8a8b0" stroke-width="1"/><path d="M9.500 10.500l3.500 4" stroke="#8a8a92" stroke-width="1.600" stroke-dasharray="1.500 .7"/><path d="M4.500 5l5 5.500" stroke="#ececf0" stroke-width="1"/></svg>
<svg style="left:257px;top:247px" width="16" height="16" viewBox="0 0 16 16"><path d="M3 4l2.500-1 1.500 1 2-1.500 2 2-1 2.500 .5 2-2 5.500-2-1.500-1.500-3.500-2.500-1z" fill="#3a1414" stroke="#1c0c0c" stroke-width=".6"/><path d="M4.500 5.500l2.500 1 2.500-1.500M5 8h4" stroke="#d02020" stroke-width="1.200" fill="none"/></svg>
<svg style="left:281px;top:247px" width="16" height="16" viewBox="0 0 16 16"><path d="M3 4l2.500-1 1.500 1 2-1.500 2 2-1 2.500 .5 2-2 5.500-2-1.500-1.500-3.500-2.500-1z" fill="#3a1414" stroke="#1c0c0c" stroke-width=".6"/><path d="M4.500 5.500l2.500 1 2.500-1.500M5 8h4" stroke="#d02020" stroke-width="1.200" fill="none"/></svg>
<svg style="left:310px;top:247px" width="16" height="16" viewBox="0 0 16 16"><path d="M4.500 2v2" stroke="#444" stroke-width="1.200"/><path d="M2.500 4h5.500l-.5 3.500-2 4-2.500-4z" fill="#3a1414" stroke="#1c0c0c" stroke-width=".6"/><path d="M3 5.500h4.500" stroke="#d02020" stroke-width="1.400"/><path d="M10 3v10" stroke="#d4d4da" stroke-width="1.800"/></svg>
<svg style="left:340px;top:247px" width="16" height="16" viewBox="0 0 16 16"><rect x=".5" y="1.500" width="15" height="13" fill="#fff" stroke="#7a7a82"/><rect x="1" y="2" width="14" height="2.500" fill="#4caf30"/><rect x="1" y="4.500" width="6" height="3" fill="#8adf30"/><rect x="7" y="4.500" width="4" height="3" fill="#ffe020"/><rect x="11" y="4.500" width="4" height="3" fill="#ff9020"/><rect x="1" y="7.500" width="6" height="3" fill="#d4f040"/><rect x="7" y="7.500" width="4" height="3" fill="#ffb020"/><rect x="11" y="7.500" width="4" height="3" fill="#f04820"/><rect x="1" y="10.500" width="6" height="3.500" fill="#ffe840"/><rect x="7" y="10.500" width="4" height="3.500" fill="#ff9020"/><rect x="11" y="10.500" width="4" height="3.500" fill="#e83020"/><path d="M7 2v12M11 2v12M1 7.500h14M1 10.500h14" stroke="#fff" stroke-width=".6"/></svg>
<svg style="left:376px;top:247px" width="16" height="16" viewBox="0 0 16 16"><path d="M2 1.500v12.500h13" fill="none" stroke="#3a5ab0" stroke-width="1.300"/><path d="M2.500 12c2-9 5-10 7-6s3 3 5 1" fill="none" stroke="#e03030" stroke-width="1.300"/><path d="M2.500 6c3 1 5 7 8 5s3-5 4-6" fill="none" stroke="#3a66d8" stroke-width="1.200"/><path d="M2.500 13c3-1 6-4 9-3" fill="none" stroke="#38a838" stroke-width="1"/><circle cx="12" cy="12" r="3.300" fill="#f07820" stroke="#b04808" stroke-width=".6"/><rect x="10" y="11.300" width="4" height="1.400" fill="#fff"/></svg>
<svg style="left:465px;top:247px" width="16" height="16" viewBox="0 0 16 16"><path d="M1.500 2.500h12l-4.500 5.500v5l-3-1.500v-3.500z" fill="#d8d8de" stroke="#6a6a74"/><circle cx="11.500" cy="11.500" r="3.200" fill="#f07820" stroke="#b04808" stroke-width=".6"/><rect x="9.500" y="10.800" width="4" height="1.400" fill="#fff"/></svg>
<svg style="left:488px;top:247px" width="16" height="16" viewBox="0 0 16 16"><rect x="1.500" y="1.500" width="12" height="12" fill="#fff" stroke="#3a5ab0"/><rect x="2" y="2" width="11" height="2.500" fill="#88a4e0"/><path d="M2 7h11M2 10h11M6 4.500v9M9.500 4.500v9" stroke="#b0bce0" stroke-width=".8"/><path d="M3 5l7 7" stroke="#e04040" stroke-width="1.200"/><circle cx="11.500" cy="11.500" r="3.200" fill="#f07820" stroke="#b04808" stroke-width=".6"/><rect x="9.500" y="10.800" width="4" height="1.400" fill="#fff"/></svg>
<svg style="left:510px;top:247px" width="16" height="16" viewBox="0 0 16 16"><path d="M1.500 2.500h13l-5 6v5.500l-3-1.500v-4z" fill="#c8c8ce" stroke="#5a5a64"/></svg>
<svg style="left:534px;top:247px" width="16" height="16" viewBox="0 0 16 16"><rect x="1.500" y="1.500" width="13" height="13" fill="#fff" stroke="#3a5ab0"/><rect x="2" y="2" width="12" height="2.500" fill="#88a4e0"/><path d="M2 7.500h12M2 11h12M6 4.500v10M10 4.500v10" stroke="#b0bce0" stroke-width=".8"/><rect x="6" y="7.500" width="4" height="3.500" fill="#58c848"/></svg>
<svg style="left:563px;top:247px" width="16" height="16" viewBox="0 0 16 16"><path d="M2 14l1-4 8.500-8.500 3 3-8.500 8.500z" fill="#f0c040" stroke="#8a6a10" stroke-width=".8"/><path d="M2 14l1-4 3 3z" fill="#f4dcb0" stroke="#8a6a10" stroke-width=".6"/><path d="M10.500 2.500l3 3" stroke="#c04040" stroke-width="1.500"/></svg>
<svg style="left:586px;top:247px" width="16" height="16" viewBox="0 0 16 16"><rect x="1.500" y="3.500" width="11" height="11" fill="#d4ecc0" stroke="#4a8a38"/><path d="M3.500 7h7M3.500 9.500h7M3.500 12h5" stroke="#4a8a38" stroke-width=".8"/><path d="M6 11l1-3 6.500-6.500 2 2-6.500 6.500z" fill="#f0c040" stroke="#8a6a10" stroke-width=".7"/></svg>
<svg style="left:661px;top:247px" width="16" height="16" viewBox="0 0 16 16"><path d="M4 14l4-6-3-5M8 8l5-4M8 8l3 5" stroke="#b8b8c0" stroke-width="1.200" fill="none"/><circle cx="8" cy="8" r="1.600" fill="#a8a8b0"/><circle cx="5" cy="3" r="1.300" fill="#a8a8b0"/><circle cx="13" cy="4" r="1.300" fill="#a8a8b0"/><circle cx="4" cy="14" r="1.300" fill="#a8a8b0"/></svg>
<svg style="left:683px;top:247px" width="16" height="16" viewBox="0 0 16 16"><path d="M1.500 5l5 3 3.500-3 4.500 4M6.500 8l-4 4M10 5l1 7" stroke="#b8b8c0" stroke-width="1.200" fill="none"/><circle cx="6.500" cy="8" r="1.500" fill="#a8a8b0"/><circle cx="10" cy="5" r="1.500" fill="#a8a8b0"/><circle cx="14" cy="9" r="1.200" fill="#a8a8b0"/></svg>
<svg style="left:706px;top:247px" width="16" height="16" viewBox="0 0 16 16"><path d="M2 13l4-5-3-5M6 8l5-1 3-5M11 7l3 7M6 8l1 6" stroke="#b8b8c0" stroke-width="1.200" fill="none"/><circle cx="6" cy="8" r="1.500" fill="#a8a8b0"/><circle cx="11" cy="7" r="1.500" fill="#a8a8b0"/><circle cx="3" cy="3" r="1.200" fill="#a8a8b0"/><circle cx="14" cy="2.500" r="1.200" fill="#a8a8b0"/></svg>
<svg style="left:730px;top:247px" width="16" height="16" viewBox="0 0 16 16"><path d="M1 9c2.500-6 4.500-6 7-1s4.500 3 7-1" fill="none" stroke="#1a2ac0" stroke-width="1.400"/></svg>
<span class="t" style="left:225px;top:247px;color:#e01010;font-size:9px;line-height:9px;height:9px">1</span>
<span class="t" style="left:248px;top:247px;color:#e01010;font-size:9px;line-height:9px;height:9px">2</span>
<span class="t" style="left:270px;top:247px;color:#e01010;font-size:9px;line-height:9px;height:9px">1</span>
<span class="t" style="left:293px;top:247px;color:#e01010;font-size:9px;line-height:9px;height:9px">2</span>
<span class="t" style="left:323px;top:249px;color:#e01010;font-weight:bold;font-size:10px;line-height:10px;height:10px">1</span>
<svg style="left:329px;top:253px" width="6" height="3" viewBox="0 0 6 3"><path d="M0 0h6l-3 3z" fill="#000"/></svg>
<svg style="left:358px;top:253px" width="6" height="3" viewBox="0 0 6 3"><path d="M0 0h6l-3 3z" fill="#000"/></svg>
<svg style="left:446px;top:253px" width="6" height="3" viewBox="0 0 6 3"><path d="M0 0h6l-3 3z" fill="#000"/></svg>
<span class="t" style="left:412px;top:247px;;letter-spacing:-0.07px">Tuner</span>
<span class="t" style="left:612px;top:246px;color:#2a4ae0;font-weight:bold;font-size:15px;line-height:16px;height:16px">+</span>
<span class="t" style="left:637px;top:245px;color:#2a4ae0;font-weight:bold;font-size:15px;line-height:16px;height:16px">-</span>
<div class="a" style="left:253px;top:268px;width:1px;height:423px;background:#8c8a90"></div>
<div class="a" style="left:198px;top:306px;width:1431px;height:1px;background:#a4a4aa"></div>
<div class="a" style="left:254px;top:307px;width:1375px;height:1px;background:#d4d4d8"></div>
<div class="a" style="left:197px;top:241px;width:1px;height:710px;background:#a0a0a8"></div>
<div class="a" style="left:200px;top:269px;width:53px;height:18px;background:#ebe9ed;border:1px solid;border-color:#fbfbfd #a8a6ae #a8a6ae #fbfbfd"></div>
<div class="a" style="left:200px;top:288px;width:53px;height:18px;background:#ebe9ed;border:1px solid;border-color:#fbfbfd #a8a6ae #a8a6ae #fbfbfd"></div>
<span class="t" style="left:205px;top:271px;font-size:10px;color:#222;letter-spacing:-0.38px">Rpm / Col</span>
<span class="t" style="left:209px;top:290px;font-size:10px;color:#222;letter-spacing:-0.14px">inHg/psi</span>
<div class="a" style="left:254px;top:268px;width:684px;height:19px;background:#fff"></div>
<span class="t" style="left:258px;top:271px;font-size:9.500px;color:#222">1</span>
<div class="a" style="left:254px;top:288px;width:38px;height:18px;background:#ebe9ed;border:1px solid;border-color:#fbfbfd #a8a6ae #a8a6ae #fbfbfd"></div>
<span class="t" style="left:254px;top:290px;width:34px;text-align:right">-27.3</span>
<div class="a" style="left:291px;top:270px;width:1px;height:16px;background:#e4e4ea"></div>
<span class="t" style="left:296px;top:271px;font-size:9.500px;color:#222">2</span>
<div class="a" style="left:292px;top:288px;width:38px;height:18px;background:#ebe9ed;border:1px solid;border-color:#fbfbfd #a8a6ae #a8a6ae #fbfbfd"></div>
<span class="t" style="left:292px;top:290px;width:34px;text-align:right">-20.9</span>
<div class="a" style="left:329px;top:270px;width:1px;height:16px;background:#e4e4ea"></div>
<span class="t" style="left:334px;top:271px;font-size:9.500px;color:#222">3</span>
<div class="a" style="left:330px;top:288px;width:38px;height:18px;background:#ebe9ed;border:1px solid;border-color:#fbfbfd #a8a6ae #a8a6ae #fbfbfd"></div>
<span class="t" style="left:330px;top:290px;width:34px;text-align:right">-17.4</span>
<div class="a" style="left:367px;top:270px;width:1px;height:16px;background:#e4e4ea"></div>
<span class="t" style="left:372px;top:271px;font-size:9.500px;color:#222">4</span>
<div class="a" style="left:368px;top:288px;width:38px;height:18px;background:#ebe9ed;border:1px solid;border-color:#fbfbfd #a8a6ae #a8a6ae #fbfbfd"></div>
<span class="t" style="left:368px;top:290px;width:34px;text-align:right">-14.2</span>
<div class="a" style="left:405px;top:270px;width:1px;height:16px;background:#e4e4ea"></div>
<span class="t" style="left:410px;top:271px;font-size:9.500px;color:#222">5</span>
<div class="a" style="left:406px;top:288px;width:38px;height:18px;background:#ebe9ed;border:1px solid;border-color:#fbfbfd #a8a6ae #a8a6ae #fbfbfd"></div>
<span class="t" style="left:406px;top:290px;width:34px;text-align:right">-10.8</span>
<div class="a" style="left:443px;top:270px;width:1px;height:16px;background:#e4e4ea"></div>
<span class="t" style="left:448px;top:271px;font-size:9.500px;color:#222">6</span>
<div class="a" style="left:444px;top:288px;width:38px;height:18px;background:#ebe9ed;border:1px solid;border-color:#fbfbfd #a8a6ae #a8a6ae #fbfbfd"></div>
<span class="t" style="left:444px;top:290px;width:34px;text-align:right">-7.3</span>
<div class="a" style="left:481px;top:270px;width:1px;height:16px;background:#e4e4ea"></div>
<span class="t" style="left:486px;top:271px;font-size:9.500px;color:#222">7</span>
<div class="a" style="left:482px;top:288px;width:38px;height:18px;background:#ebe9ed;border:1px solid;border-color:#fbfbfd #a8a6ae #a8a6ae #fbfbfd"></div>
<span class="t" style="left:482px;top:290px;width:34px;text-align:right">-3.9</span>
<div class="a" style="left:519px;top:270px;width:1px;height:16px;background:#e4e4ea"></div>
<span class="t" style="left:524px;top:271px;font-size:9.500px;color:#222">8</span>
<div class="a" style="left:520px;top:288px;width:38px;height:18px;background:#ebe9ed;border:1px solid;border-color:#fbfbfd #a8a6ae #a8a6ae #fbfbfd"></div>
<span class="t" style="left:520px;top:290px;width:34px;text-align:right">-2.4</span>
<div class="a" style="left:557px;top:270px;width:1px;height:16px;background:#e4e4ea"></div>
<span class="t" style="left:562px;top:271px;font-size:9.500px;color:#222">9</span>
<div class="a" style="left:558px;top:288px;width:38px;height:18px;background:#ebe9ed;border:1px solid;border-color:#fbfbfd #a8a6ae #a8a6ae #fbfbfd"></div>
<span class="t" style="left:558px;top:290px;width:34px;text-align:right">-0.9</span>
<div class="a" style="left:595px;top:270px;width:1px;height:16px;background:#e4e4ea"></div>
<span class="t" style="left:600px;top:271px;font-size:9.500px;color:#222">B10</span>
<div class="a" style="left:596px;top:288px;width:38px;height:18px;background:#ebe9ed;border:1px solid;border-color:#fbfbfd #a8a6ae #a8a6ae #fbfbfd"></div>
<span class="t" style="left:596px;top:290px;width:34px;text-align:right">0.42</span>
<div class="a" style="left:633px;top:270px;width:1px;height:16px;background:#e4e4ea"></div>
<span class="t" style="left:638px;top:271px;font-size:9.500px;color:#222">B11</span>
<div class="a" style="left:634px;top:288px;width:38px;height:18px;background:#ebe9ed;border:1px solid;border-color:#fbfbfd #a8a6ae #a8a6ae #fbfbfd"></div>
<span class="t" style="left:634px;top:290px;width:34px;text-align:right">2</span>
<div class="a" style="left:671px;top:270px;width:1px;height:16px;background:#e4e4ea"></div>
<span class="t" style="left:676px;top:271px;font-size:9.500px;color:#222">B12</span>
<div class="a" style="left:672px;top:288px;width:38px;height:18px;background:#ebe9ed;border:1px solid;border-color:#fbfbfd #a8a6ae #a8a6ae #fbfbfd"></div>
<span class="t" style="left:672px;top:290px;width:34px;text-align:right">3.38</span>
<div class="a" style="left:709px;top:270px;width:1px;height:16px;background:#e4e4ea"></div>
<span class="t" style="left:714px;top:271px;font-size:9.500px;color:#222">B13</span>
<div class="a" style="left:710px;top:288px;width:38px;height:18px;background:#ebe9ed;border:1px solid;border-color:#fbfbfd #a8a6ae #a8a6ae #fbfbfd"></div>
<span class="t" style="left:710px;top:290px;width:34px;text-align:right">4.64</span>
<div class="a" style="left:747px;top:270px;width:1px;height:16px;background:#e4e4ea"></div>
<span class="t" style="left:752px;top:271px;font-size:9.500px;color:#222">B14</span>
<div class="a" style="left:748px;top:288px;width:38px;height:18px;background:#ebe9ed;border:1px solid;border-color:#fbfbfd #a8a6ae #a8a6ae #fbfbfd"></div>
<span class="t" style="left:748px;top:290px;width:34px;text-align:right">6.02</span>
<div class="a" style="left:785px;top:270px;width:1px;height:16px;background:#e4e4ea"></div>
<span class="t" style="left:790px;top:271px;font-size:9.500px;color:#222">B15</span>
<div class="a" style="left:786px;top:288px;width:38px;height:18px;background:#ebe9ed;border:1px solid;border-color:#fbfbfd #a8a6ae #a8a6ae #fbfbfd"></div>
<span class="t" style="left:786px;top:290px;width:34px;text-align:right">7.3</span>
<div class="a" style="left:823px;top:270px;width:1px;height:16px;background:#e4e4ea"></div>
<span class="t" style="left:828px;top:271px;font-size:9.500px;color:#222">B16</span>
<div class="a" style="left:824px;top:288px;width:38px;height:18px;background:#ebe9ed;border:1px solid;border-color:#fbfbfd #a8a6ae #a8a6ae #fbfbfd"></div>
<span class="t" style="left:824px;top:290px;width:34px;text-align:right">8.67</span>
<div class="a" style="left:861px;top:270px;width:1px;height:16px;background:#e4e4ea"></div>
<span class="t" style="left:866px;top:271px;font-size:9.500px;color:#222">B17</span>
<div class="a" style="left:862px;top:288px;width:38px;height:18px;background:#ebe9ed;border:1px solid;border-color:#fbfbfd #a8a6ae #a8a6ae #fbfbfd"></div>
<span class="t" style="left:862px;top:290px;width:34px;text-align:right">9.94</span>
<div class="a" style="left:899px;top:270px;width:1px;height:16px;background:#e4e4ea"></div>
<span class="t" style="left:904px;top:271px;font-size:9.500px;color:#222">B18</span>
<div class="a" style="left:900px;top:288px;width:38px;height:18px;background:#ebe9ed;border:1px solid;border-color:#fbfbfd #a8a6ae #a8a6ae #fbfbfd"></div>
<span class="t" style="left:900px;top:290px;width:34px;text-align:right">11.31</span>
<div class="a" style="left:938px;top:268px;width:1px;height:38px;background:#a8a6ae"></div>
<div class="a" style="left:200px;top:307px;width:53px;height:16px;background:#ebe9ed;border:1px solid;border-color:#fbfbfd #a8a6ae #a8a6ae #fbfbfd"></div>
<span class="t" style="left:204px;top:309px;">0</span>
<div class="a" style="left:200px;top:323px;width:53px;height:16px;background:#ebe9ed;border:1px solid;border-color:#fbfbfd #a8a6ae #a8a6ae #fbfbfd"></div>
<span class="t" style="left:204px;top:325px;">600</span>
<div class="a" style="left:200px;top:339px;width:53px;height:16px;background:#ebe9ed;border:1px solid;border-color:#fbfbfd #a8a6ae #a8a6ae #fbfbfd"></div>
<span class="t" style="left:204px;top:341px;">1000</span>
<div class="a" style="left:200px;top:355px;width:53px;height:16px;background:#ebe9ed;border:1px solid;border-color:#fbfbfd #a8a6ae #a8a6ae #fbfbfd"></div>
<span class="t" style="left:204px;top:357px;">1500</span>
<div class="a" style="left:200px;top:371px;width:53px;height:16px;background:#ebe9ed;border:1px solid;border-color:#fbfbfd #a8a6ae #a8a6ae #fbfbfd"></div>
<span class="t" style="left:204px;top:373px;">2000</span>
<div class="a" style="left:200px;top:387px;width:53px;height:16px;background:#ebe9ed;border:1px solid;border-color:#fbfbfd #a8a6ae #a8a6ae #fbfbfd"></div>
<span class="t" style="left:204px;top:389px;">2500</span>
<div class="a" style="left:200px;top:403px;width:53px;height:16px;background:#ebe9ed;border:1px solid;border-color:#fbfbfd #a8a6ae #a8a6ae #fbfbfd"></div>
<span class="t" style="left:204px;top:405px;">3000</span>
<div class="a" style="left:200px;top:419px;width:53px;height:16px;background:#ebe9ed;border:1px solid;border-color:#fbfbfd #a8a6ae #a8a6ae #fbfbfd"></div>
<span class="t" style="left:204px;top:421px;">3550</span>
<div class="a" style="left:200px;top:435px;width:53px;height:16px;background:#ebe9ed;border:1px solid;border-color:#fbfbfd #a8a6ae #a8a6ae #fbfbfd"></div>
<span class="t" style="left:204px;top:437px;">4000</span>
<div class="a" style="left:200px;top:451px;width:53px;height:16px;background:#ebe9ed;border:1px solid;border-color:#fbfbfd #a8a6ae #a8a6ae #fbfbfd"></div>
<span class="t" style="left:204px;top:453px;">4500</span>
<div class="a" style="left:200px;top:467px;width:53px;height:16px;background:#ebe9ed;border:1px solid;border-color:#fbfbfd #a8a6ae #a8a6ae #fbfbfd"></div>
<span class="t" style="left:204px;top:469px;">5000</span>
<div class="a" style="left:200px;top:483px;width:53px;height:16px;background:#ebe9ed;border:1px solid;border-color:#fbfbfd #a8a6ae #a8a6ae #fbfbfd"></div>
<span class="t" style="left:204px;top:485px;">5250</span>
<div class="a" style="left:200px;top:499px;width:53px;height:16px;background:#ebe9ed;border:1px solid;border-color:#fbfbfd #a8a6ae #a8a6ae #fbfbfd"></div>
<span class="t" style="left:204px;top:501px;">5450</span>
<div class="a" style="left:200px;top:515px;width:53px;height:16px;background:#ebe9ed;border:1px solid;border-color:#fbfbfd #a8a6ae #a8a6ae #fbfbfd"></div>
<span class="t" style="left:204px;top:517px;">5750</span>
<div class="a" style="left:200px;top:531px;width:53px;height:16px;background:#ebe9ed;border:1px solid;border-color:#fbfbfd #a8a6ae #a8a6ae #fbfbfd"></div>
<span class="t" style="left:204px;top:533px;">6050</span>
<div class="a" style="left:200px;top:547px;width:53px;height:16px;background:#ebe9ed;border:1px solid;border-color:#fbfbfd #a8a6ae #a8a6ae #fbfbfd"></div>
<span class="t" style="left:204px;top:549px;">6500</span>
<div class="a" style="left:200px;top:563px;width:53px;height:16px;background:#ebe9ed;border:1px solid;border-color:#fbfbfd #a8a6ae #a8a6ae #fbfbfd"></div>
<span class="t" style="left:204px;top:565px;">7000</span>
<div class="a" style="left:200px;top:579px;width:53px;height:16px;background:#ebe9ed;border:1px solid;border-color:#fbfbfd #a8a6ae #a8a6ae #fbfbfd"></div>
<span class="t" style="left:204px;top:581px;">7500</span>
<div class="a" style="left:200px;top:595px;width:53px;height:16px;background:#ebe9ed;border:1px solid;border-color:#fbfbfd #a8a6ae #a8a6ae #fbfbfd"></div>
<span class="t" style="left:204px;top:597px;">8050</span>
<div class="a" style="left:200px;top:611px;width:53px;height:16px;background:#ebe9ed;border:1px solid;border-color:#fbfbfd #a8a6ae #a8a6ae #fbfbfd"></div>
<span class="t" style="left:204px;top:613px;">9000</span>
<style>.g{position:absolute;left:254px;top:308px;width:684px;height:320px;display:grid;grid-template-columns:repeat(18,38px);grid-auto-rows:16px;background:#d4d4dc}.g i{font-style:normal;text-align:right;padding-right:4px;line-height:14px;padding-top:1px;border-left:1px solid #d8dcd8;border-bottom:1px solid #d8dcd8;white-space:nowrap;overflow:hidden}.c0{background:#80ff70}.c1{background:#58ff9b}.c2{background:#33ffc3}.c3{background:#10ffe8}.c4{background:#08f9f4}.c5{background:#03f6fb}.c6{background:#00f4ff}.c7{background:#16ffe2}.c8{background:#1dffda}.c9{background:#24ffd2}.c10{background:#b0ff45}.c11{background:#99ff5a}.c12{background:#71ff80}.c13{background:#50ffa3}.c14{background:#0fffe9}.c15{background:#05f8f8}.c16{background:#edff10}.c17{background:#d8ff23}.c18{background:#b7ff3f}.c19{background:#85ff6c}.c20{background:#5fff93}.c21{background:#49ffab}.c22{background:#3affbb}.c23{background:#26ffd0}.c24{background:#ffec00}.c25{background:#ffff00}.c26{background:#e3ff18}.c27{background:#caff2f}.c28{background:#97ff5c}.c29{background:#6fff82}.c30{background:#43ffb1}.c31{background:#31ffc5}.c32{background:#21ffd6}.c33{background:#ffbd00}.c34{background:#ffd800}.c35{background:#fff000}.c36{background:#f3ff0a}.c37{background:#c8ff31}.c38{background:#75ff7c}.c39{background:#6eff84}.c40{background:#61ff91}.c41{background:#4effa5}.c42{background:#3effb7}.c43{background:#2affcc}.c44{background:#ff9a00}.c45{background:#ffae00}.c46{background:#ffca00}.c47{background:#ffe300}.c48{background:#e8ff14}.c49{background:#beff39}.c50{background:#95ff5e}.c51{background:#8cff66}.c52{background:#7cff74}.c53{background:#6aff88}.c54{background:#59ff99}.c55{background:#45ffaf}.c56{background:#ffac00}.c57{background:#ffce00}.c58{background:#fffb00}.c59{background:#c5ff33}.c60{background:#b5ff41}.c61{background:#9eff56}.c62{background:#89ff68}.c63{background:#73ff7e}.c64{background:#f8ff06}.c65{background:#daff21}.c66{background:#b3ff43}.c67{background:#90ff62}.c68{background:#ff9600}.c69{background:#ffa700}.c70{background:#ffb800}.c71{background:#dfff1d}.c72{background:#cfff2b}.c73{background:#a3ff51}.c74{background:#64ff8e}.c75{background:#52ffa1}.c76{background:#ff9400}.c77{background:#ffa500}.c78{background:#ffb600}.c79{background:#ffc700}.c80{background:#ffe700}.c81{background:#d3ff27}.c82{background:#bcff3b}.c83{background:#a7ff4d}.c84{background:#8eff64}.c85{background:#79ff78}.c86{background:#68ff8a}.c87{background:#56ff9d}.c88{background:#ffdf00}.c89{background:#fff400}.c90{background:#dcff1f}.c91{background:#5dff95}</style>
<div class="g"><i class="c0">16.50</i><i class="c0">16.50</i><i class="c0">16.50</i><i class="c0">16.50</i><i class="c1">11.00</i><i class="c2">6.00</i><i class="c3">1.25</i><i class="c4">-2.00</i><i class="c5">-4.00</i><i class="c6">-5.00</i><i class="c7">2.00</i><i class="c7">2.00</i><i class="c7">2.00</i><i class="c8">3.00</i><i class="c9">4.00</i><i class="c9">4.00</i><i class="c9">4.00</i><i class="c9">4.00</i><i class="c0">16.50</i><i class="c0">16.50</i><i class="c0">16.50</i><i class="c0">16.50</i><i class="c1">11.00</i><i class="c2">6.00</i><i class="c3">1.25</i><i class="c4">-2.00</i><i class="c5">-4.00</i><i class="c6">-5.00</i><i class="c7">2.00</i><i class="c7">2.00</i><i class="c7">2.00</i><i class="c8">3.00</i><i class="c9">4.00</i><i class="c9">4.00</i><i class="c9">4.00</i><i class="c9">4.00</i><i class="c10">21.75</i><i class="c10">21.75</i><i class="c10">21.75</i><i class="c11">19.25</i><i class="c12">14.50</i><i class="c13">10.00</i><i class="c9">4.00</i><i class="c14">1.00</i><i class="c4">-2.00</i><i class="c15">-3.00</i><i class="c7">2.00</i><i class="c7">2.00</i><i class="c7">2.00</i><i class="c8">3.00</i><i class="c9">4.00</i><i class="c9">4.00</i><i class="c9">4.00</i><i class="c9">4.00</i><i class="c16">28.25</i><i class="c16">28.25</i><i class="c16">28.25</i><i class="c17">26.00</i><i class="c18">22.50</i><i class="c19">17.00</i><i class="c20">12.00</i><i class="c21">9.00</i><i class="c22">7.00</i><i class="c2">6.00</i><i class="c23">4.25</i><i class="c7">2.00</i><i class="c7">2.00</i><i class="c8">3.00</i><i class="c9">4.00</i><i class="c9">4.00</i><i class="c9">4.00</i><i class="c9">4.00</i><i class="c24">32.50</i><i class="c24">32.50</i><i class="c24">32.50</i><i class="c25">30.25</i><i class="c26">27.25</i><i class="c27">24.50</i><i class="c28">19.00</i><i class="c29">14.25</i><i class="c1">11.00</i><i class="c13">10.00</i><i class="c30">8.25</i><i class="c31">5.75</i><i class="c32">3.50</i><i class="c8">3.00</i><i class="c9">4.00</i><i class="c9">4.00</i><i class="c9">4.00</i><i class="c9">4.00</i><i class="c33">38.00</i><i class="c33">38.00</i><i class="c33">38.00</i><i class="c34">34.75</i><i class="c35">32.00</i><i class="c36">29.00</i><i class="c37">24.25</i><i class="c11">19.25</i><i class="c38">15.00</i><i class="c39">14.00</i><i class="c40">12.25</i><i class="c41">9.75</i><i class="c42">7.50</i><i class="c2">6.00</i><i class="c43">4.75</i><i class="c9">4.00</i><i class="c9">4.00</i><i class="c9">4.00</i><i class="c44">42.00</i><i class="c44">42.00</i><i class="c44">42.00</i><i class="c45">39.75</i><i class="c46">36.50</i><i class="c47">33.50</i><i class="c48">27.75</i><i class="c49">23.25</i><i class="c50">18.75</i><i class="c51">17.75</i><i class="c52">16.00</i><i class="c53">13.50</i><i class="c54">11.25</i><i class="c41">9.75</i><i class="c55">8.50</i><i class="c2">6.00</i><i class="c9">4.00</i><i class="c9">4.00</i><i class="c44">42.00</i><i class="c44">42.00</i><i class="c44">42.00</i><i class="c56">40.00</i><i class="c33">38.00</i><i class="c57">36.00</i><i class="c58">30.75</i><i class="c48">27.75</i><i class="c59">24.00</i><i class="c59">24.00</i><i class="c60">22.25</i><i class="c61">19.75</i><i class="c62">17.50</i><i class="c52">16.00</i><i class="c63">14.75</i><i class="c40">12.25</i><i class="c13">10.00</i><i class="c42">7.50</i><i class="c44">42.00</i><i class="c44">42.00</i><i class="c44">42.00</i><i class="c56">40.00</i><i class="c33">38.00</i><i class="c57">36.00</i><i class="c35">32.00</i><i class="c64">29.50</i><i class="c65">26.25</i><i class="c65">26.25</i><i class="c27">24.50</i><i class="c66">22.00</i><i class="c61">19.75</i><i class="c67">18.25</i><i class="c19">17.00</i><i class="c12">14.50</i><i class="c40">12.25</i><i class="c41">9.75</i><i class="c44">42.00</i><i class="c44">42.00</i><i class="c44">42.00</i><i class="c56">40.00</i><i class="c33">38.00</i><i class="c57">36.00</i><i class="c35">32.00</i><i class="c64">29.50</i><i class="c65">26.25</i><i class="c65">26.25</i><i class="c27">24.50</i><i class="c66">22.00</i><i class="c61">19.75</i><i class="c67">18.25</i><i class="c19">17.00</i><i class="c12">14.50</i><i class="c40">12.25</i><i class="c41">9.75</i><i class="c68">42.50</i><i class="c68">42.50</i><i class="c68">42.50</i><i class="c69">40.50</i><i class="c70">38.50</i><i class="c46">36.50</i><i class="c24">32.50</i><i class="c25">30.25</i><i class="c71">26.75</i><i class="c71">26.75</i><i class="c72">25.00</i><i class="c18">22.50</i><i class="c73">20.25</i><i class="c50">18.75</i><i class="c62">17.50</i><i class="c38">15.00</i><i class="c74">12.75</i><i class="c75">10.25</i><i class="c76">42.75</i><i class="c76">42.75</i><i class="c76">42.75</i><i class="c77">40.75</i><i class="c78">38.75</i><i class="c79">36.75</i><i class="c80">33.00</i><i class="c58">30.75</i><i class="c26">27.25</i><i class="c26">27.25</i><i class="c81">25.50</i><i class="c82">23.00</i><i class="c83">20.75</i><i class="c11">19.25</i><i class="c84">18.00</i><i class="c85">15.50</i><i class="c86">13.25</i><i class="c87">10.75</i><i class="c76">42.75</i><i class="c76">42.75</i><i class="c76">42.75</i><i class="c77">40.75</i><i class="c78">38.75</i><i class="c79">36.75</i><i class="c80">33.00</i><i class="c58">30.75</i><i class="c26">27.25</i><i class="c26">27.25</i><i class="c81">25.50</i><i class="c82">23.00</i><i class="c83">20.75</i><i class="c11">19.25</i><i class="c84">18.00</i><i class="c85">15.50</i><i class="c86">13.25</i><i class="c87">10.75</i><i class="c76">42.75</i><i class="c76">42.75</i><i class="c76">42.75</i><i class="c77">40.75</i><i class="c78">38.75</i><i class="c79">36.75</i><i class="c80">33.00</i><i class="c58">30.75</i><i class="c26">27.25</i><i class="c26">27.25</i><i class="c81">25.50</i><i class="c82">23.00</i><i class="c83">20.75</i><i class="c11">19.25</i><i class="c84">18.00</i><i class="c85">15.50</i><i class="c86">13.25</i><i class="c87">10.75</i><i class="c76">42.75</i><i class="c76">42.75</i><i class="c76">42.75</i><i class="c77">40.75</i><i class="c78">38.75</i><i class="c79">36.75</i><i class="c88">34.00</i><i class="c89">31.50</i><i class="c16">28.25</i><i class="c16">28.25</i><i class="c90">26.50</i><i class="c59">24.00</i><i class="c10">21.75</i><i class="c73">20.25</i><i class="c28">19.00</i><i class="c0">16.50</i><i class="c29">14.25</i><i class="c91">11.75</i><i class="c76">42.75</i><i class="c76">42.75</i><i class="c76">42.75</i><i class="c77">40.75</i><i class="c78">38.75</i><i class="c79">36.75</i><i class="c88">34.00</i><i class="c89">31.50</i><i class="c16">28.25</i><i class="c16">28.25</i><i class="c90">26.50</i><i class="c59">24.00</i><i class="c10">21.75</i><i class="c73">20.25</i><i class="c28">19.00</i><i class="c0">16.50</i><i class="c29">14.25</i><i class="c91">11.75</i><i class="c76">42.75</i><i class="c76">42.75</i><i class="c76">42.75</i><i class="c77">40.75</i><i class="c78">38.75</i><i class="c79">36.75</i><i class="c88">34.00</i><i class="c89">31.50</i><i class="c16">28.25</i><i class="c16">28.25</i><i class="c90">26.50</i><i class="c59">24.00</i><i class="c10">21.75</i><i class="c73">20.25</i><i class="c28">19.00</i><i class="c0">16.50</i><i class="c29">14.25</i><i class="c91">11.75</i><i class="c76">42.75</i><i class="c76">42.75</i><i class="c76">42.75</i><i class="c77">40.75</i><i class="c78">38.75</i><i class="c79">36.75</i><i class="c88">34.00</i><i class="c89">31.50</i><i class="c16">28.25</i><i class="c16">28.25</i><i class="c90">26.50</i><i class="c59">24.00</i><i class="c10">21.75</i><i class="c73">20.25</i><i class="c28">19.00</i><i class="c0">16.50</i><i class="c29">14.25</i><i class="c91">11.75</i><i class="c76">42.75</i><i class="c76">42.75</i><i class="c76">42.75</i><i class="c77">40.75</i><i class="c78">38.75</i><i class="c79">36.75</i><i class="c88">34.00</i><i class="c89">31.50</i><i class="c16">28.25</i><i class="c16">28.25</i><i class="c90">26.50</i><i class="c59">24.00</i><i class="c10">21.75</i><i class="c73">20.25</i><i class="c28">19.00</i><i class="c0">16.50</i><i class="c29">14.25</i><i class="c91">11.75</i><i class="c76">42.75</i><i class="c76">42.75</i><i class="c76">42.75</i><i class="c77">40.75</i><i class="c78">38.75</i><i class="c79">36.75</i><i class="c88">34.00</i><i class="c89">31.50</i><i class="c16">28.25</i><i class="c16">28.25</i><i class="c90">26.50</i><i class="c59">24.00</i><i class="c10">21.75</i><i class="c73">20.25</i><i class="c28">19.00</i><i class="c0">16.50</i><i class="c29">14.25</i><i class="c91">11.75</i></div>
<div class="a" style="left:255px;top:308px;width:37px;height:15px;background:#3a5ea8;outline:1px dotted #2a2010;outline-offset:-1px;color:#fff;text-align:right;padding-right:4px;line-height:14px;padding-top:1px">16.50</div>
<div class="a" style="left:198px;top:692px;width:1433px;height:7px;background:linear-gradient(180deg,#e9e8ee 0,#e9e8ee 2px,#fff 3px,#fff 5px,#e9e8ee 6px)"></div>
<div class="a" style="left:198px;top:699px;width:1433px;height:2px;background:#8a8a90"></div>
<div class="a" style="left:198px;top:701px;width:1433px;height:26px;background:linear-gradient(180deg,#fbfbfc,#f5f4f7)"></div>
<div class="a" style="left:201px;top:702px;width:224px;height:24px;background:linear-gradient(180deg,#fbfbfc 0,#f4f3f6 50%,#eae8ee 100%);border-right:1px solid #c0bec6;border-radius:3px 0 0 3px"></div>
<div class="grip" style="left:205px;top:705px"></div>
<div class="sep" style="left:260px;top:704px"></div>
<div class="sep" style="left:318px;top:704px"></div>
<svg style="left:214px;top:705px" width="16" height="16" viewBox="0 0 16 16"><rect x=".5" y=".5" width="15" height="15" fill="#fff" stroke="#7a8ab0"/><path d="M1 5c3-3 5 2 7 0s4-2 7 0v4c-3-2-5 1-7 1s-4-3-7-1z" fill="#f06060"/><path d="M1 9c3-2 5 1 7 1s4-3 7-1v3c-3-2-5 1-7 1s-4-3-7-1z" fill="#5a8ae0"/><path d="M1 12c3-2 5 1 7 1s4-3 7-1v3h-14z" fill="#58b858"/></svg>
<svg style="left:237px;top:705px" width="16" height="16" viewBox="0 0 16 16"><defs><linearGradient id="rg" x1="0" y1="0" x2=".3" y2="1"><stop offset="0" stop-color="#f02818"/><stop offset=".5" stop-color="#a88028"/><stop offset="1" stop-color="#18e028"/></linearGradient></defs><path d="M2 7l1.500 6 3.500 2.500-1-7z" fill="#181008"/><path d="M6 2.500q1-1.500 2.500-1l3.500 1q1.500.5 2 2l1.500 5q.3 1.500-1 2.200l-6.500 3.500q-1 .4-1.300-1l-1.700-9q-.2-1.500 1-2.700z" fill="url(#rg)"/><path d="M2 7l4-4.500" stroke="#181008" stroke-width="1.200"/></svg>
<svg style="left:264px;top:705px" width="16" height="16" viewBox="0 0 16 16"><rect x="0" y="0" width="16" height="16" fill="#101008"/><path d="M1 9c2-7 4-7 5 0s3 7 4.500-1 3-8 4.500 3" fill="none" stroke="#e8e020" stroke-width="1.600"/></svg>
<svg style="left:294px;top:705px" width="16" height="16" viewBox="0 0 16 16"><rect x="0" y="0" width="16" height="16" fill="#101008"/><path d="M1 9c2-7 4-7 5 0s3 7 4.500-1 3-8 4.500 3" fill="none" stroke="#e8e020" stroke-width="1.600"/><circle cx="12.500" cy="12.500" r="3" fill="#f07820" stroke="#b04808" stroke-width=".6"/><rect x="10.700" y="11.900" width="3.600" height="1.300" fill="#fff"/></svg>
<svg style="left:282px;top:712px" width="6" height="3" viewBox="0 0 6 3"><path d="M0 0h6l-3 3z" fill="#000"/></svg>
<div class="a" style="left:321px;top:702px;width:101px;height:22px;background:#e4e6f2;border:1px solid #3a5cb0"></div>
<span class="t" style="left:326px;top:706px;;letter-spacing:-0.22px">Graph beside table</span>
<div class="a" style="left:199px;top:727px;width:1431px;height:224px;background:#000"></div>
<svg style="left:199px;top:727px" width="1431" height="219" viewBox="199 727 1431 219" font-family="DejaVu Sans,sans-serif" font-weight="bold"><path d="M279.500 756v161.500h1331.500" fill="none" stroke="#fff" stroke-width="1"/><path d="M279 756.500h1332" stroke="#fff" stroke-width="1" stroke-dasharray="12.500 7.500"/><path d="M279 788.500h1332" stroke="#fff" stroke-width="1" stroke-dasharray="12.500 7.500"/><path d="M279 820.500h1332" stroke="#fff" stroke-width="1" stroke-dasharray="12.500 7.500"/><path d="M279 852.500h1332" stroke="#fff" stroke-width="1" stroke-dasharray="12.500 7.500"/><path d="M279 884.500h1332" stroke="#fff" stroke-width="1" stroke-dasharray="12.500 7.500"/><text x="203" y="744" font-size="14" fill="#008000">Map</text><text x="241" y="744" font-size="14" fill="#ffff00" textLength="25.500">Afr</text><text x="236.500" y="760" font-size="12.400" fill="#008000" text-anchor="end">11.31</text><text x="277" y="760" font-size="12.400" fill="#ffff00" text-anchor="end">19.99</text><text x="236.500" y="792" font-size="12.400" fill="#008000" text-anchor="end">5.92</text><text x="277" y="792" font-size="12.400" fill="#ffff00" text-anchor="end">17.99</text><text x="236.500" y="824" font-size="12.400" fill="#008000" text-anchor="end">0.52</text><text x="277" y="824" font-size="12.400" fill="#ffff00" text-anchor="end">15.99</text><text x="236.500" y="856" font-size="12.400" fill="#008000" text-anchor="end">-9.9</text><text x="277" y="856" font-size="12.400" fill="#ffff00" text-anchor="end">14</text><text x="236.500" y="889" font-size="12.400" fill="#008000" text-anchor="end">-20.9</text><text x="277" y="889" font-size="12.400" fill="#ffff00" text-anchor="end">12</text><text x="236.500" y="921" font-size="12.400" fill="#008000" text-anchor="end">-31.9</text><text x="277" y="921" font-size="12.400" fill="#ffff00" text-anchor="end">10</text><text x="279" y="928.500" font-size="11" fill="#fff" text-anchor="middle">0</text><text x="400" y="928.500" font-size="11" fill="#fff" text-anchor="middle">1</text><text x="521" y="928.500" font-size="11" fill="#fff" text-anchor="middle">2</text><text x="642" y="928.500" font-size="11" fill="#fff" text-anchor="middle">3</text><text x="763" y="928.500" font-size="11" fill="#fff" text-anchor="middle">4</text><text x="884" y="928.500" font-size="11" fill="#fff" text-anchor="middle">5</text><text x="1005" y="928.500" font-size="11" fill="#fff" text-anchor="middle">6</text><text x="1126" y="928.500" font-size="11" fill="#fff" text-anchor="middle">7</text><text x="1247" y="928.500" font-size="11" fill="#fff" text-anchor="middle">8</text><text x="1368" y="928.500" font-size="11" fill="#fff" text-anchor="middle">9</text><text x="1489" y="928.500" font-size="11" fill="#fff" text-anchor="middle">10</text><text x="1610" y="928.500" font-size="11" fill="#fff" text-anchor="middle">11</text><text x="877" y="942" font-size="14" fill="#fff" textLength="102">Rpm X 1000</text></svg>
<div class="a" style="left:0px;top:946px;width:1680px;height:44px;background:#f6f5f8"></div>
<div class="a" style="left:1661px;top:100px;width:19px;height:846px;background:linear-gradient(90deg,#e2eafb 0,#fbfcff 50%,#dce6f8 100%);border-left:1px solid #7c8cac"></div>
<div class="a" style="left:1662px;top:101px;width:16px;height:17px;background:linear-gradient(180deg,#ffffff 0,#f0f6fe 25%,#cbdcf3 60%,#bdd1ed 100%);border:1px solid #8ea4c8;border-radius:2px;box-shadow:inset 1px 1px 0 rgba(255,255,255,.8)"></div>
<svg style="left:1665px;top:106px" width="10" height="7" viewBox="0 0 10 7"><path d="M1 6l4-4 4 4" fill="none" stroke="#4a5266" stroke-width="2"/></svg>
<div class="a" style="left:1662px;top:119px;width:16px;height:788px;background:linear-gradient(90deg,#ffffff 0,#e8f1fe 14%,#d4e3f9 50%,#b9cde9 100%);border:1px solid #8ea4c8;border-radius:2px;box-shadow:inset 1px 1px 0 rgba(255,255,255,.8)"></div>
<div class="a" style="left:1666px;top:509px;width:7px;height:1px;background:#8ea0c8"></div>
<div class="a" style="left:1666px;top:511px;width:7px;height:1px;background:#8ea0c8"></div>
<div class="a" style="left:1666px;top:513px;width:7px;height:1px;background:#8ea0c8"></div>
<div class="a" style="left:1666px;top:515px;width:7px;height:1px;background:#8ea0c8"></div>
<div class="a" style="left:1662px;top:929px;width:16px;height:17px;background:linear-gradient(180deg,#ffffff 0,#f0f6fe 25%,#cbdcf3 60%,#bdd1ed 100%);border:1px solid #8ea4c8;border-radius:2px;box-shadow:inset 1px 1px 0 rgba(255,255,255,.8)"></div>
<svg style="left:1665px;top:934px" width="10" height="7" viewBox="0 0 10 7"><path d="M1 1l4 4 4-4" fill="none" stroke="#4a5266" stroke-width="2"/></svg>
<div class="a" style="left:0px;top:946px;width:1661px;height:18px;background:linear-gradient(180deg,#e2eafb 0,#fbfcff 50%,#dce6f8 100%)"></div>
<div class="a" style="left:1661px;top:946px;width:19px;height:18px;background:#ebe9ed"></div>
<div class="a" style="left:0px;top:946px;width:2px;height:18px;background:#808080"></div>
<div class="a" style="left:3px;top:947px;width:16px;height:16px;background:linear-gradient(180deg,#ffffff 0,#f0f6fe 25%,#cbdcf3 60%,#bdd1ed 100%);border:1px solid #8ea4c8;border-radius:2px;box-shadow:inset 1px 1px 0 rgba(255,255,255,.8)"></div>
<svg style="left:7px;top:950px" width="7" height="10" viewBox="0 0 7 10"><path d="M6 1l-4 4 4 4" fill="none" stroke="#4a5266" stroke-width="2"/></svg>
<div class="a" style="left:27px;top:947px;width:1616px;height:16px;background:linear-gradient(180deg,#ffffff 0,#e8f1fe 14%,#d4e3f9 50%,#b9cde9 100%);border:1px solid #8ea4c8;border-radius:2px;box-shadow:inset 1px 1px 0 rgba(255,255,255,.8)"></div>
<div class="a" style="left:832px;top:952px;width:1px;height:6px;background:#8ea0c8"></div>
<div class="a" style="left:834px;top:952px;width:1px;height:6px;background:#8ea0c8"></div>
<div class="a" style="left:836px;top:952px;width:1px;height:6px;background:#8ea0c8"></div>
<div class="a" style="left:838px;top:952px;width:1px;height:6px;background:#8ea0c8"></div>
<div class="a" style="left:1645px;top:947px;width:16px;height:16px;background:linear-gradient(180deg,#ffffff 0,#f0f6fe 25%,#cbdcf3 60%,#bdd1ed 100%);border:1px solid #8ea4c8;border-radius:2px;box-shadow:inset 1px 1px 0 rgba(255,255,255,.8)"></div>
<svg style="left:1650px;top:950px" width="7" height="10" viewBox="0 0 7 10"><path d="M1 1l4 4-4 4" fill="none" stroke="#4a5266" stroke-width="2"/></svg>
<div class="a" style="left:0px;top:964px;width:1680px;height:26px;background:linear-gradient(90deg,#efeef3 0,#f3f2f6 40%,#f9f9f9 70%)"></div>
<div class="sp" style="left:2px;width:171px"></div>
<span class="t" style="left:5px;top:971px;;letter-spacing:-0.11px">242 whp 10 psi final open loop.cal</span>
<div class="sp" style="left:175px;width:48px"></div>
<span class="t" style="left:178px;top:971px;;letter-spacing:-0.16px">eCt-273</span>
<div class="sp" style="left:225px;width:46px"></div>
<span class="t" style="left:228px;top:971px;;letter-spacing:0.13px">v0.0.63</span>
<div class="sp" style="left:273px;width:50px"></div>
<div class="sp" style="left:325px;width:208px"></div>
<span class="t" style="left:328px;top:971px;;letter-spacing:-0.09px">&gt;Load: Map 1.7 bar &gt;Final multiplier 0.53</span>
<div class="sp" style="left:535px;width:138px"></div>
<span class="t" style="left:538px;top:971px;;letter-spacing:-0.10px">Datalogging: Disconnected</span>
<div class="sp" style="left:675px;width:178px"></div>
<span class="t" style="left:678px;top:971px;;letter-spacing:-0.13px">Emulator: Disconnected</span>
<div class="sp" style="left:855px;width:98px"></div>
<span class="t" style="left:858px;top:971px;;letter-spacing:-0.34px">WB: PLX M on D14</span>
<div class="a" style="left:0px;top:990px;width:1680px;height:60px;background:linear-gradient(180deg,#2c54b4 0,#2c54b4 1px,#8ac4f2 1px,#6aaae8 6px,#4e92e0 13px,#3d7bd0 14px,#3d7bd0 44px,#3567c4 52px,#2a4eae 60px)"></div>
<div class="a" style="left:-12px;top:991px;width:110px;height:30px;background:linear-gradient(180deg,#8ecb8e 0,#62b462 20%,#46a446 48%,#109a10 52%,#12b012 80%,#18c818 100%);border-radius:0 18px 14px 0 / 0 15px 15px 0;box-shadow:inset -2px -1px 2px rgba(0,60,0,.55),inset 0 1px 1px rgba(255,255,255,.5)"></div>
<svg style="left:10px;top:995px" width="20" height="19" viewBox="0 0 20 19"><path d="M3 2.500c2.500-1.500 4.500-1 6.500.3l-1.500 6c-2-1.300-4-1.600-6.500-.3z" fill="#f05818"/><path d="M10.500 3c2 1.200 4 1.600 6.500.2l-1.500 6c-2.500 1.400-4.500 1-6.500-.2z" fill="#7cc81c"/><path d="M1.200 9.700c2.500-1.300 4.500-1 6.500.3l-1.500 6c-2-1.300-4-1.600-6.500-.3z" fill="#4a8af0"/><path d="M8.700 10.300c2 1.200 4 1.600 6.500.2l-1.500 6c-2.500 1.400-4.500 1-6.500-.2z" fill="#f8c818"/></svg>
<span class="t" style="left:35px;top:995px;color:#fff;font-style:italic;font-weight:bold;font-size:19px;line-height:20px;height:20px;text-shadow:1px 1px 1px #1a5a1a;letter-spacing:-0.44px">start</span>
<svg style="left:108px;top:996.5px" width="17" height="17" viewBox="0 0 16 16"><rect x="1" y="1" width="14" height="14" rx="3" fill="#3a86e8" stroke="#1c56b8"/><rect x="3.500" y="3.500" width="8" height="9" rx="1" fill="#fff"/><path d="M5 10l5-5 1.500 1.500-5 5z" fill="#506080"/><circle cx="13" cy="3" r="1.200" fill="#f04020"/></svg>
<svg style="left:131px;top:996.5px" width="17" height="17" viewBox="0 0 16 16"><rect x="3" y="1" width="9" height="8" fill="#d8d8d8" stroke="#404040"/><rect x="4.500" y="2.500" width="6" height="5" fill="#1828e0"/><path d="M1 13l2-3.500h9l3 3.500z" fill="#e8e8e8" stroke="#303030" stroke-width=".8"/><path d="M12 13c2 0 2 2 .5 2" stroke="#303030" fill="none"/></svg>
<svg style="left:154px;top:996.5px" width="17" height="17" viewBox="0 0 16 16"><rect x=".5" y="3" width="15" height="10" rx="3" fill="#f4e400" stroke="#706400"/><rect x="3" y="5.500" width="10" height="5" rx="1.500" fill="#1a1a10"/><path d="M4.500 9l2-2 1.500 1.500 1.500-1.500 2 2" stroke="#f4e400" fill="none"/></svg>
<svg style="left:177px;top:996.5px" width="17" height="17" viewBox="0 0 16 16"><rect x="1" y="4" width="14" height="8" fill="#101010"/><path d="M2.500 2.500v2M5.500 2.500v2M8.500 2.500v2M11.500 2.500v2M13.500 2.500v2M2.500 11.500v2M5.500 11.500v2M8.500 11.500v2M11.500 11.500v2M13.500 11.500v2" stroke="#101010" stroke-width="1.600"/></svg>
<svg style="left:200px;top:996.5px" width="17" height="17" viewBox="0 0 16 16"><text x="8.500" y="14" font-size="18" font-weight="bold" font-style="italic" fill="#3a9af2" stroke="#cfe6ff" stroke-width=".5" text-anchor="middle" font-family="Liberation Sans,sans-serif">e</text><path d="M1 13c-1.500-3 4-9.500 13.500-11.500" fill="none" stroke="#f0c020" stroke-width="1.600"/></svg>
<svg style="left:223px;top:996.5px" width="17" height="17" viewBox="0 0 16 16"><path d="M2 .5h9l3.500 3.500v11.500h-12.500z" fill="#fff" stroke="#b0b0c0"/><path d="M3 5c2-2 4 2 6 0s3 3 5 1M3 8c2-2 4 2 6 0s3 3 4 1" stroke="#3048d8" fill="none" stroke-width="1.200"/><rect x="6" y="11" width="9" height="4.500" fill="#f07818"/></svg>
<svg style="left:246px;top:996.5px" width="17" height="17" viewBox="0 0 16 16"><path d="M2 .5h9l3.500 3.500v11.500h-12.500z" fill="#fff" stroke="#b0b0c0"/><path d="M3 10l4-5 3 3 4-5" stroke="#e02828" fill="none" stroke-width="1.200"/><path d="M3 4l5 4 6 2" stroke="#3048d8" fill="none"/><rect x="6" y="11" width="9" height="4.500" fill="#f07818"/></svg>
<svg style="left:269px;top:996.5px" width="17" height="17" viewBox="0 0 16 16"><circle cx="8" cy="8" r="7" fill="#3858c8"/><path d="M8 1a7 7 0 1 0 7 7c0 4-5 5-7 3s-1-4 1-4c-2-1-1-3 1-3-1-1-1-2-2-3z" fill="#f08018"/><path d="M2 5c1-2 3-3.500 5-4" stroke="#f8c030" stroke-width="1.500" fill="none"/></svg>
<svg style="left:292px;top:996.5px" width="17" height="17" viewBox="0 0 16 16"><rect x="0" y="0" width="16" height="16" fill="#3a3020"/><circle cx="4" cy="4" r="2.500" fill="#e8a020"/><circle cx="12" cy="4" r="2.500" fill="#e8a020"/><rect x="3" y="8" width="10" height="4" fill="#b0b0a8"/><rect x="6" y="5" width="4" height="3" fill="#f0f0e0"/></svg>
<svg style="left:315px;top:996.5px" width="17" height="17" viewBox="0 0 16 16"><rect x="1" y="1" width="13" height="8" fill="#189838" stroke="#0c5c20"/><rect x="3" y="3" width="3" height="3" fill="#0c4c18"/><rect x="8" y="3" width="4" height="2" fill="#0c4c18"/><rect x="1" y="9.500" width="14" height="5.500" fill="#e02010"/><path d="M3 12h2M7 12h2M11 12h2" stroke="#f8c020" stroke-width="2"/></svg>
<svg style="left:338px;top:996.5px" width="17" height="17" viewBox="0 0 16 16"><rect x="0" y="0" width="16" height="16" fill="#f8f000"/><path d="M4 1.500c2 4 2 9 0 13M12 1.500c-2 4-2 9 0 13M4 8h8" stroke="#101010" stroke-width="1.400" fill="none"/><path d="M8 5.500l2.500 2.500-2.500 2.500-2.500-2.500z" fill="#e81010"/></svg>
<svg style="left:361px;top:996.5px" width="17" height="17" viewBox="0 0 16 16"><rect x="1" y="4" width="14" height="8.500" fill="#101010"/><path d="M2.500 2.500v2M5.500 2.500v2M8.500 2.500v2M11.500 2.500v2M13.500 2.500v2M2.500 12v2M5.500 12v2M8.500 12v2M11.500 12v2M13.500 12v2" stroke="#101010" stroke-width="1.600"/><text x="8" y="11" font-size="7" fill="#fff" text-anchor="middle" font-family="Liberation Sans,sans-serif" font-weight="bold">IO</text></svg>
<svg style="left:384px;top:996.5px" width="17" height="17" viewBox="0 0 16 16"><path d="M1 9l9-5.500 5 3-9 5.500z" fill="#e8e8ec" stroke="#70707c"/><path d="M4 8.500l6-3.500 2.500 1.500-6 3.500z" fill="#58d0e0"/><path d="M1 9v2l5 3v-2M6 14l9-5.500v-2" fill="#a8a8b0" stroke="#70707c" stroke-width=".6"/></svg>
<svg style="left:407px;top:996.5px" width="17" height="17" viewBox="0 0 16 16"><rect x="0" y="0" width="16" height="16" fill="#f0f0f0"/><circle cx="8" cy="8" r="7.500" fill="#181014"/><path d="M1 8c2-6 9-8 14-2-3-1-6 0-7 3z" fill="#e81828"/></svg>
<svg style="left:430px;top:996.5px" width="17" height="17" viewBox="0 0 16 16"><path d="M2 14l2.500-5 5-5 2 2-5 5z" fill="#585858" stroke="#282828" stroke-width=".7"/><path d="M10 3.500l2-2 2.500 2.500-2 2z" fill="#40a040"/><path d="M8 5l3 3" stroke="#e03030" stroke-width="1.500"/><circle cx="2.500" cy="14" r="1.200" fill="#c8c8c8"/></svg>
<svg style="left:453px;top:996.5px" width="17" height="17" viewBox="0 0 16 16"><path d="M2 1.500h12" stroke="#fff" stroke-width="1.300"/><path d="M8 1.500v2" stroke="#202020" stroke-width="2"/><path d="M9 3.500l-7 7h4l-2 5 9-8h-4.500l4-4z" fill="#f8f000" stroke="#a09800" stroke-width=".5"/></svg>
<svg style="left:476px;top:996.5px" width="17" height="17" viewBox="0 0 16 16"><rect x="0" y="0" width="16" height="16" fill="#101090"/><circle cx="8" cy="8" r="6" fill="#8820a0"/><text x="8" y="12" font-size="10" fill="#20e8e0" text-anchor="middle" font-family="Liberation Sans,sans-serif" font-weight="bold">NT</text></svg>
<svg style="left:108px;top:1026.5px" width="17" height="17" viewBox="0 0 16 16"><path d="M1 11l3-4 6-2 5 1-2 5-7 2z" fill="#101010"/><path d="M3 11l3-3 5-1" stroke="#18b028" stroke-width="2"/><path d="M8 6l5 1" stroke="#d02020" stroke-width="2"/><circle cx="4" cy="13" r="1.300" fill="#e8e8e8"/><circle cx="11" cy="12" r="1.300" fill="#e8e8e8"/></svg>
<svg style="left:131px;top:1026.5px" width="17" height="17" viewBox="0 0 16 16"><path d="M1 8l9-5 5 3.500-9 5z" fill="#58c040" stroke="#204818"/><path d="M1 8v2l5 3.500v-2M6 13.500l9-5v-2" fill="#484840" stroke="#202018" stroke-width=".6"/><path d="M2.500 11v2M5 12.500v2M8 12.500v2M11 11v2M13.500 9.500v2" stroke="#b0b0a0"/></svg>
<svg style="left:154px;top:1026.5px" width="17" height="17" viewBox="0 0 16 16"><path d="M1 8l9-5 5 3.500-9 5z" fill="#a09820" stroke="#403c08"/><path d="M1 8v2l5 3.500v-2M6 13.500l9-5v-2" fill="#383830" stroke="#202018" stroke-width=".6"/><path d="M2.500 11v2M5 12.500v2M8 12.500v2M11 11v2M13.500 9.500v2" stroke="#b0b0a0"/></svg>
<svg style="left:177px;top:1026.5px" width="17" height="17" viewBox="0 0 16 16"><path d="M1 0c3 3 3 5 0 8 3 3 3 5 0 8h4c3-3 3-5 0-8 3-3 3-5 0-8z" fill="#f8a810"/><path d="M5 0c3 3 3 5 0 8 3 3 3 5 0 8h4c3-3 3-5 0-8 3-3 3-5 0-8z" fill="#f85810"/><path d="M10 0c3 3 3 5 0 8 3 3 3 5 0 8h4c3-3 3-5 0-8 3-3 3-5 0-8z" fill="#e81010"/></svg>
<svg style="left:200px;top:1026.5px" width="17" height="17" viewBox="0 0 16 16"><rect x="0" y="1" width="16" height="14" fill="#f0f0f0"/><path d="M1 3h8M1 5h5" stroke="#d02020" stroke-width="1.500"/><path d="M2 9l12-3M2 12l12-3" stroke="#909090" stroke-width="2"/><rect x="9" y="11" width="6" height="3.500" fill="#d02020"/></svg>
<svg style="left:223px;top:1026.5px" width="17" height="17" viewBox="0 0 16 16"><path d="M2 3h12v3l1.500 2v5h-15v-5l1.500-2z" fill="#b81828"/><rect x="3" y="0" width="10" height="3.500" fill="#101080"/><rect x="4" y="5" width="8" height="3" fill="#4060c0"/><circle cx="4" cy="13.500" r="1.800" fill="#101010"/><circle cx="12" cy="13.500" r="1.800" fill="#101010"/></svg>
<svg style="left:246px;top:1026.5px" width="17" height="17" viewBox="0 0 16 16"><path d="M1 10c0-2 2-3 4-3.500 2-2 6-2 8 0 2 .5 2.500 2 2 3.500z" fill="#e83818"/><path d="M6 6.500c1.500-1 4-1 5.500 0z" fill="#f8b090"/><circle cx="4.500" cy="10.500" r="1.500" fill="#301010"/><circle cx="12" cy="10.500" r="1.500" fill="#301010"/></svg>
<svg style="left:269px;top:1026.5px" width="17" height="17" viewBox="0 0 16 16"><rect x="0" y="0" width="16" height="16" fill="#080808"/><path d="M3 2c3 3 5 7 6 12M6 1c3 4 5 8 5.500 12M10 2c2 3 3 6 3.500 9" stroke="#c8d0c0" stroke-width="1.200" fill="none"/></svg>
<svg style="left:292px;top:1026.5px" width="17" height="17" viewBox="0 0 16 16"><circle cx="7" cy="9" r="6" fill="#909090" stroke="#404040"/><circle cx="7" cy="9" r="2.800" fill="#303030"/><path d="M7 3h8v5h-3" fill="#b0b0b0" stroke="#404040" stroke-width=".8"/></svg>
<svg style="left:315px;top:1026.5px" width="17" height="17" viewBox="0 0 16 16"><rect x="0" y="0" width="16" height="16" fill="#fff"/><path d="M3 16c-2-6 0-13 5-14 5 0 7 4 6 8l-2 6z" fill="#181818"/><path d="M5 15c-1-5 0-9 3-9s4 3 3 9z" fill="#e8e8e8"/><path d="M6 9h1.500M9 9h1.500M7 12.500h3" stroke="#303030"/></svg>
<svg style="left:338px;top:1026.5px" width="17" height="17" viewBox="0 0 16 16"><circle cx="8" cy="8" r="7" fill="#fff" stroke="#e81010" stroke-width="2"/><path d="M8 8c-1.500-3-5-2-5 0s3.500 3 5 0 5-2 5 0-3.500 3-5 0" fill="none" stroke="#101010" stroke-width="1.300"/></svg>
<svg style="left:361px;top:1026.5px" width="17" height="17" viewBox="0 0 16 16"><path d="M8 1l3.500 2v4l-3.500 2-3.500-2v-4z" fill="#f8d010" stroke="#806800" stroke-width=".7"/><path d="M4.500 7.500l3.500 2v4l-3.500 2-3.500-2v-4z" fill="#f8d010" stroke="#806800" stroke-width=".7"/><path d="M11.500 7.500l3.500 2v4l-3.500 2-3.500-2v-4z" fill="#f8d010" stroke="#806800" stroke-width=".7"/></svg>
<svg style="left:384px;top:1026.5px" width="17" height="17" viewBox="0 0 16 16"><path d="M1 7l9-4.500 5 3.500-9 4.500z" fill="#282828" stroke="#080808"/><path d="M2.500 7l4-2 2 1.500-4 2z" fill="#e02020"/><path d="M1 7v2.500l5 3.500v-2.500M6 13l9-4.500v-2.500" fill="#181818" stroke="#080808" stroke-width=".6"/><path d="M3 11v1.500M5.500 12.500v1.500M9 12v1.500M12 10.500v1.500" stroke="#909090"/></svg>
<div class="a" style="left:516px;top:994px;width:158px;height:24px;background:linear-gradient(180deg,#6cacf0 0,#5596e6 3px,#4385dc 8px,#3b7ad4 14px,#3a78d2 19px,#3166c0 24px);border:1px solid #2a56b0;border-bottom-color:#24489c;box-shadow:inset 1px 1px 0 rgba(255,255,255,.35);border-radius:3px"></div>
<svg style="left:525px;top:998px" width="16" height="16" viewBox="0 0 16 16"><text x="8.500" y="14" font-size="18" font-weight="bold" font-style="italic" fill="#3a9af2" stroke="#cfe6ff" stroke-width=".5" text-anchor="middle" font-family="Liberation Sans,sans-serif">e</text><path d="M1 13c-1.500-3 4-9.500 13.500-11.500" fill="none" stroke="#f0c020" stroke-width="1.600"/></svg>
<span class="t" style="left:544px;top:998px;color:#fff;letter-spacing:0.00px">Post reply - Complete...</span>
<div class="a" style="left:676px;top:994px;width:158px;height:24px;background:linear-gradient(180deg,#6cacf0 0,#5596e6 3px,#4385dc 8px,#3b7ad4 14px,#3a78d2 19px,#3166c0 24px);border:1px solid #2a56b0;border-bottom-color:#24489c;box-shadow:inset 1px 1px 0 rgba(255,255,255,.35);border-radius:3px"></div>
<svg style="left:685px;top:998px" width="16" height="16" viewBox="0 0 16 16"><path d="M1 13v-9.500h4.500l1.500 1.500h6v1.500" fill="#f6d66a" stroke="#a07a18"/><path d="M1 13l2.500-5.500h11l-2.500 5.500z" fill="#fbe58f" stroke="#a07a18"/><rect x="6" y="2" width="5" height="5" fill="#fff" stroke="#8090b0" stroke-width=".7"/></svg>
<span class="t" style="left:704px;top:998px;color:#fff;letter-spacing:0.06px">D:\Tuen\Haltech</span>
<div class="a" style="left:836px;top:994px;width:158px;height:24px;background:linear-gradient(180deg,#1e52b4 0,#2458ba 50%,#2a60c2 100%);border:1px solid #163c94;box-shadow:inset 1px 1px 2px rgba(0,0,40,.45);border-radius:3px"></div>
<svg style="left:845px;top:998px" width="16" height="16" viewBox="0 0 16 16"><rect x=".5" y="3" width="15" height="10" rx="3" fill="#f4e400" stroke="#706400"/><rect x="3" y="5.500" width="10" height="5" rx="1.500" fill="#1a1a10"/><path d="M4.500 9l2-2 1.500 1.500 1.500-1.500 2 2" stroke="#f4e400" fill="none"/></svg>
<span class="t" style="left:864px;top:998px;color:#fff;letter-spacing:0.17px">eCtune (Tuner) - D:\...</span>
<div class="a" style="left:996px;top:994px;width:158px;height:24px;background:linear-gradient(180deg,#6cacf0 0,#5596e6 3px,#4385dc 8px,#3b7ad4 14px,#3a78d2 19px,#3166c0 24px);border:1px solid #2a56b0;border-bottom-color:#24489c;box-shadow:inset 1px 1px 0 rgba(255,255,255,.35);border-radius:3px"></div>
<svg style="left:1005px;top:998px" width="16" height="16" viewBox="0 0 16 16"><path d="M3 6h9l-1 9h-7z" fill="#e8d8b0" stroke="#806830"/><path d="M5 6l-1-5M8 6v-5.500M10.500 6l1.500-5" stroke="#c04020" stroke-width="1.600"/><path d="M6.500 6l-.5-4" stroke="#3060d0" stroke-width="1.400"/><path d="M9.500 6l.5-4" stroke="#30a040" stroke-width="1.400"/></svg>
<span class="t" style="left:1024px;top:998px;color:#fff;letter-spacing:0.10px">untitled - Paint</span>
<div class="a" style="left:1439px;top:1008px;width:56px;height:24px;background:#828282;border:1px solid #d8d8d8;border-bottom-color:#a0a0a0"></div>
<div class="a" style="left:1440px;top:1009px;width:11px;height:22px;background:#7cf83c"></div>
<div class="a" style="left:1495px;top:1015px;width:3px;height:10px;background:#b8b8b8"></div>
<span class="t" style="left:1455px;top:1011px;font-size:14px;line-height:16px;height:16px;color:#101010;font-family:DejaVu Sans,sans-serif;letter-spacing:-2.04px">23%</span>
<svg style="left:1505px;top:1011px" width="18" height="18" viewBox="0 0 18 18"><path d="M0 9h4" stroke="#000" stroke-width="2"/><path d="M3 9c0-4 3-6 6-6h3v12h-3c-3 0-6-2-6-6z" fill="#000"/><path d="M12 5.500h5M12 12.500h5" stroke="#000" stroke-width="2.400"/></svg>
<div class="a" style="left:1540px;top:991px;width:140px;height:59px;background:linear-gradient(180deg,#f4f8ff 0,#d4e2f8 5px,#c8daf4 14px,#c4d6f2 44px,#9cb6e4 50px,#86a4dc 59px);border-left:1px solid #dfe8fa"></div>
<svg style="left:1550px;top:993.5px" width="16" height="16" viewBox="0 0 16 16"><rect x="2" y="3" width="8" height="7" fill="#303860" stroke="#8088a8"/><path d="M1 13h10l1 2h-12z" fill="#d0d4e0" stroke="#8088a8" stroke-width=".6"/><path d="M12 3c1.500 1.500 1.500 3.500 0 5M14 1.500c2 2.500 2 5.500 0 8" stroke="#404858" fill="none"/></svg>
<svg style="left:1568px;top:993.5px" width="16" height="16" viewBox="0 0 16 16"><rect x=".5" y=".5" width="15" height="15" rx="1" fill="#5088e0" stroke="#2850a8"/><rect x="3" y="1" width="9" height="5" fill="#e0e8f8"/><path d="M2 10h7v-3l6 4.500-6 4.500v-3h-7z" fill="#2870f0" stroke="#e0e8ff" stroke-width=".7"/></svg>
<svg style="left:1586px;top:993.5px" width="16" height="16" viewBox="0 0 16 16"><path d="M8 .5c2 1.500 4 2 6.500 2 0 6-2 10-6.500 13-4.500-3-6.500-7-6.500-13 2.500 0 4.500-.5 6.500-2z" fill="#f4d020" stroke="#a0a0a8" stroke-width="1.200"/><rect x="7.200" y="4" width="1.800" height="5.500" fill="#101010"/><rect x="7.200" y="10.500" width="1.800" height="1.800" fill="#101010"/></svg>
<svg style="left:1550px;top:1011.8px" width="16" height="16" viewBox="0 0 16 16"><rect x="5" y="1" width="8" height="7" fill="#4858a0" stroke="#8890b8"/><rect x="1" y="5" width="8" height="7" fill="#5868b0" stroke="#98a0c8"/><path d="M0 14h9" stroke="#c0c4d8" stroke-width="2"/><path d="M8 9l7 7M15 9l-7 7" stroke="#e81818" stroke-width="2.200"/></svg>
<svg style="left:1568px;top:1011.8px" width="16" height="16" viewBox="0 0 16 16"><circle cx="7" cy="7" r="6" fill="#b8b8b8" stroke="#606060"/><circle cx="6" cy="6" r="3" fill="#505050"/><path d="M11 12c2-1 3-2 3.500-4M12 15c2-1 3.500-3 4-5" stroke="#8890d0" fill="none"/></svg>
<svg style="left:1586px;top:1011.8px" width="16" height="16" viewBox="0 0 16 16"><path d="M3 8l5-5v3h4v4h-4v3z" fill="#30a838" stroke="#186820" stroke-width=".7" transform="rotate(-30 8 8)"/><path d="M3 12l8-3 4 3-8 3.500z" fill="#d8d8d0" stroke="#505048"/><path d="M6 12.500l5-2" stroke="#303030" stroke-width="1.600"/></svg>
<svg style="left:1550px;top:1030.1px" width="16" height="16" viewBox="0 0 16 16"><ellipse cx="8" cy="9" rx="5" ry="6" fill="#e8b010" stroke="#705000"/><path d="M8 3v12" stroke="#705000"/><circle cx="8" cy="3.500" r="2.200" fill="#282010"/><path d="M3 7l-2.500-1.500M3 10h-3M3.500 13l-2.500 2M13 7l2.500-1.500M13 10h3M12.500 13l2.500 2" stroke="#282010"/></svg>
<svg style="left:1568px;top:1030.1px" width="16" height="16" viewBox="0 0 16 16"><circle cx="8" cy="8" r="7.500" fill="#d8d8dc" stroke="#808088"/><circle cx="8" cy="8" r="6" fill="#f0f0f4" stroke="#a0a0a8" stroke-width=".6"/><path d="M10 2l-5 7h3l-2 6 5.500-8h-3z" fill="#f09010" stroke="#a05000" stroke-width=".5"/></svg>
<svg style="left:1586px;top:1030.1px" width="16" height="16" viewBox="0 0 16 16"><circle cx="8" cy="8" r="8" fill="#0808f0"/><text x="8.300" y="13" font-size="13" font-weight="bold" fill="#fff" text-anchor="middle" font-family="Liberation Sans,sans-serif">P</text></svg>
<span class="t" style="left:1625px;top:994px;;letter-spacing:-0.31px">17:43</span>
<span class="t" style="left:1616px;top:1013px;;letter-spacing:-0.23px">Thursday</span>
<span class="t" style="left:1613px;top:1031px;;letter-spacing:0.01px">9/10/2009</span>
</body></html>
